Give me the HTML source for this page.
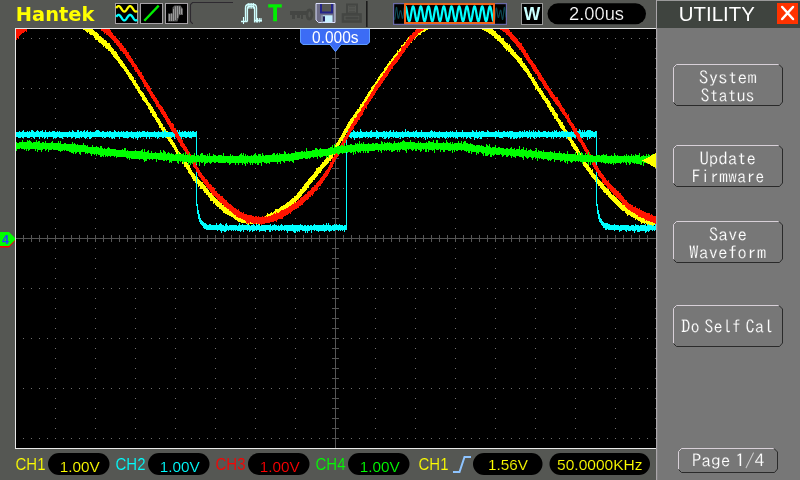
<!DOCTYPE html>
<html lang="en">
<head>
<meta charset="utf-8">
<title>Hantek DSO - Utility</title>
<style>
html,body{margin:0;padding:0;background:#555753;width:800px;height:480px;overflow:hidden}
svg{display:block;position:absolute;left:0;top:0;will-change:transform}
.ar{font-family:"Liberation Sans",sans-serif}
.go{font-family:"IPAGothic","Liberation Mono",monospace}
.btn text{font-size:18px;fill:#fff;text-anchor:middle;stroke:#777;stroke-width:0.22px}
</style>
</head>
<body>
<svg width="800" height="480" viewBox="0 0 800 480">
  <rect width="800" height="480" fill="#555753"/>

  <!-- ======================= plot area ======================= -->
  <g shape-rendering="crispEdges">
    <rect x="15" y="28" width="642" height="421" fill="#e8e8e8"/>
    <rect x="16" y="29" width="640" height="419" fill="#000"/>
    <!-- dotted graticule -->
    <path d="M23 38h1M23 88h1M23 138h1M23 188h1M23 288h1M23 338h1M23 388h1M23 438h1M31 38h1M31 88h1M31 138h1M31 188h1M31 288h1M31 338h1M31 388h1M31 438h1M39 38h1M39 88h1M39 138h1M39 188h1M39 288h1M39 338h1M39 388h1M39 438h1M47 38h1M47 88h1M47 138h1M47 188h1M47 288h1M47 338h1M47 388h1M47 438h1M55 38h1M55 48h1M55 58h1M55 68h1M55 78h1M55 88h1M55 98h1M55 108h1M55 118h1M55 128h1M55 138h1M55 148h1M55 158h1M55 168h1M55 178h1M55 188h1M55 198h1M55 208h1M55 218h1M55 228h1M55 248h1M55 258h1M55 268h1M55 278h1M55 288h1M55 298h1M55 308h1M55 318h1M55 328h1M55 338h1M55 348h1M55 358h1M55 368h1M55 378h1M55 388h1M55 398h1M55 408h1M55 418h1M55 428h1M55 438h1M63 38h1M63 88h1M63 138h1M63 188h1M63 288h1M63 338h1M63 388h1M63 438h1M71 38h1M71 88h1M71 138h1M71 188h1M71 288h1M71 338h1M71 388h1M71 438h1M79 38h1M79 88h1M79 138h1M79 188h1M79 288h1M79 338h1M79 388h1M79 438h1M87 38h1M87 88h1M87 138h1M87 188h1M87 288h1M87 338h1M87 388h1M87 438h1M95 38h1M95 48h1M95 58h1M95 68h1M95 78h1M95 88h1M95 98h1M95 108h1M95 118h1M95 128h1M95 138h1M95 148h1M95 158h1M95 168h1M95 178h1M95 188h1M95 198h1M95 208h1M95 218h1M95 228h1M95 248h1M95 258h1M95 268h1M95 278h1M95 288h1M95 298h1M95 308h1M95 318h1M95 328h1M95 338h1M95 348h1M95 358h1M95 368h1M95 378h1M95 388h1M95 398h1M95 408h1M95 418h1M95 428h1M95 438h1M103 38h1M103 88h1M103 138h1M103 188h1M103 288h1M103 338h1M103 388h1M103 438h1M111 38h1M111 88h1M111 138h1M111 188h1M111 288h1M111 338h1M111 388h1M111 438h1M119 38h1M119 88h1M119 138h1M119 188h1M119 288h1M119 338h1M119 388h1M119 438h1M127 38h1M127 88h1M127 138h1M127 188h1M127 288h1M127 338h1M127 388h1M127 438h1M135 38h1M135 48h1M135 58h1M135 68h1M135 78h1M135 88h1M135 98h1M135 108h1M135 118h1M135 128h1M135 138h1M135 148h1M135 158h1M135 168h1M135 178h1M135 188h1M135 198h1M135 208h1M135 218h1M135 228h1M135 248h1M135 258h1M135 268h1M135 278h1M135 288h1M135 298h1M135 308h1M135 318h1M135 328h1M135 338h1M135 348h1M135 358h1M135 368h1M135 378h1M135 388h1M135 398h1M135 408h1M135 418h1M135 428h1M135 438h1M143 38h1M143 88h1M143 138h1M143 188h1M143 288h1M143 338h1M143 388h1M143 438h1M151 38h1M151 88h1M151 138h1M151 188h1M151 288h1M151 338h1M151 388h1M151 438h1M159 38h1M159 88h1M159 138h1M159 188h1M159 288h1M159 338h1M159 388h1M159 438h1M167 38h1M167 88h1M167 138h1M167 188h1M167 288h1M167 338h1M167 388h1M167 438h1M175 38h1M175 48h1M175 58h1M175 68h1M175 78h1M175 88h1M175 98h1M175 108h1M175 118h1M175 128h1M175 138h1M175 148h1M175 158h1M175 168h1M175 178h1M175 188h1M175 198h1M175 208h1M175 218h1M175 228h1M175 248h1M175 258h1M175 268h1M175 278h1M175 288h1M175 298h1M175 308h1M175 318h1M175 328h1M175 338h1M175 348h1M175 358h1M175 368h1M175 378h1M175 388h1M175 398h1M175 408h1M175 418h1M175 428h1M175 438h1M183 38h1M183 88h1M183 138h1M183 188h1M183 288h1M183 338h1M183 388h1M183 438h1M191 38h1M191 88h1M191 138h1M191 188h1M191 288h1M191 338h1M191 388h1M191 438h1M199 38h1M199 88h1M199 138h1M199 188h1M199 288h1M199 338h1M199 388h1M199 438h1M207 38h1M207 88h1M207 138h1M207 188h1M207 288h1M207 338h1M207 388h1M207 438h1M215 38h1M215 48h1M215 58h1M215 68h1M215 78h1M215 88h1M215 98h1M215 108h1M215 118h1M215 128h1M215 138h1M215 148h1M215 158h1M215 168h1M215 178h1M215 188h1M215 198h1M215 208h1M215 218h1M215 228h1M215 248h1M215 258h1M215 268h1M215 278h1M215 288h1M215 298h1M215 308h1M215 318h1M215 328h1M215 338h1M215 348h1M215 358h1M215 368h1M215 378h1M215 388h1M215 398h1M215 408h1M215 418h1M215 428h1M215 438h1M223 38h1M223 88h1M223 138h1M223 188h1M223 288h1M223 338h1M223 388h1M223 438h1M231 38h1M231 88h1M231 138h1M231 188h1M231 288h1M231 338h1M231 388h1M231 438h1M239 38h1M239 88h1M239 138h1M239 188h1M239 288h1M239 338h1M239 388h1M239 438h1M247 38h1M247 88h1M247 138h1M247 188h1M247 288h1M247 338h1M247 388h1M247 438h1M255 38h1M255 48h1M255 58h1M255 68h1M255 78h1M255 88h1M255 98h1M255 108h1M255 118h1M255 128h1M255 138h1M255 148h1M255 158h1M255 168h1M255 178h1M255 188h1M255 198h1M255 208h1M255 218h1M255 228h1M255 248h1M255 258h1M255 268h1M255 278h1M255 288h1M255 298h1M255 308h1M255 318h1M255 328h1M255 338h1M255 348h1M255 358h1M255 368h1M255 378h1M255 388h1M255 398h1M255 408h1M255 418h1M255 428h1M255 438h1M263 38h1M263 88h1M263 138h1M263 188h1M263 288h1M263 338h1M263 388h1M263 438h1M271 38h1M271 88h1M271 138h1M271 188h1M271 288h1M271 338h1M271 388h1M271 438h1M279 38h1M279 88h1M279 138h1M279 188h1M279 288h1M279 338h1M279 388h1M279 438h1M287 38h1M287 88h1M287 138h1M287 188h1M287 288h1M287 338h1M287 388h1M287 438h1M295 38h1M295 48h1M295 58h1M295 68h1M295 78h1M295 88h1M295 98h1M295 108h1M295 118h1M295 128h1M295 138h1M295 148h1M295 158h1M295 168h1M295 178h1M295 188h1M295 198h1M295 208h1M295 218h1M295 228h1M295 248h1M295 258h1M295 268h1M295 278h1M295 288h1M295 298h1M295 308h1M295 318h1M295 328h1M295 338h1M295 348h1M295 358h1M295 368h1M295 378h1M295 388h1M295 398h1M295 408h1M295 418h1M295 428h1M295 438h1M303 38h1M303 88h1M303 138h1M303 188h1M303 288h1M303 338h1M303 388h1M303 438h1M311 38h1M311 88h1M311 138h1M311 188h1M311 288h1M311 338h1M311 388h1M311 438h1M319 38h1M319 88h1M319 138h1M319 188h1M319 288h1M319 338h1M319 388h1M319 438h1M327 38h1M327 88h1M327 138h1M327 188h1M327 288h1M327 338h1M327 388h1M327 438h1M343 38h1M343 88h1M343 138h1M343 188h1M343 288h1M343 338h1M343 388h1M343 438h1M351 38h1M351 88h1M351 138h1M351 188h1M351 288h1M351 338h1M351 388h1M351 438h1M359 38h1M359 88h1M359 138h1M359 188h1M359 288h1M359 338h1M359 388h1M359 438h1M367 38h1M367 88h1M367 138h1M367 188h1M367 288h1M367 338h1M367 388h1M367 438h1M375 38h1M375 48h1M375 58h1M375 68h1M375 78h1M375 88h1M375 98h1M375 108h1M375 118h1M375 128h1M375 138h1M375 148h1M375 158h1M375 168h1M375 178h1M375 188h1M375 198h1M375 208h1M375 218h1M375 228h1M375 248h1M375 258h1M375 268h1M375 278h1M375 288h1M375 298h1M375 308h1M375 318h1M375 328h1M375 338h1M375 348h1M375 358h1M375 368h1M375 378h1M375 388h1M375 398h1M375 408h1M375 418h1M375 428h1M375 438h1M383 38h1M383 88h1M383 138h1M383 188h1M383 288h1M383 338h1M383 388h1M383 438h1M391 38h1M391 88h1M391 138h1M391 188h1M391 288h1M391 338h1M391 388h1M391 438h1M399 38h1M399 88h1M399 138h1M399 188h1M399 288h1M399 338h1M399 388h1M399 438h1M407 38h1M407 88h1M407 138h1M407 188h1M407 288h1M407 338h1M407 388h1M407 438h1M415 38h1M415 48h1M415 58h1M415 68h1M415 78h1M415 88h1M415 98h1M415 108h1M415 118h1M415 128h1M415 138h1M415 148h1M415 158h1M415 168h1M415 178h1M415 188h1M415 198h1M415 208h1M415 218h1M415 228h1M415 248h1M415 258h1M415 268h1M415 278h1M415 288h1M415 298h1M415 308h1M415 318h1M415 328h1M415 338h1M415 348h1M415 358h1M415 368h1M415 378h1M415 388h1M415 398h1M415 408h1M415 418h1M415 428h1M415 438h1M423 38h1M423 88h1M423 138h1M423 188h1M423 288h1M423 338h1M423 388h1M423 438h1M431 38h1M431 88h1M431 138h1M431 188h1M431 288h1M431 338h1M431 388h1M431 438h1M439 38h1M439 88h1M439 138h1M439 188h1M439 288h1M439 338h1M439 388h1M439 438h1M447 38h1M447 88h1M447 138h1M447 188h1M447 288h1M447 338h1M447 388h1M447 438h1M455 38h1M455 48h1M455 58h1M455 68h1M455 78h1M455 88h1M455 98h1M455 108h1M455 118h1M455 128h1M455 138h1M455 148h1M455 158h1M455 168h1M455 178h1M455 188h1M455 198h1M455 208h1M455 218h1M455 228h1M455 248h1M455 258h1M455 268h1M455 278h1M455 288h1M455 298h1M455 308h1M455 318h1M455 328h1M455 338h1M455 348h1M455 358h1M455 368h1M455 378h1M455 388h1M455 398h1M455 408h1M455 418h1M455 428h1M455 438h1M463 38h1M463 88h1M463 138h1M463 188h1M463 288h1M463 338h1M463 388h1M463 438h1M471 38h1M471 88h1M471 138h1M471 188h1M471 288h1M471 338h1M471 388h1M471 438h1M479 38h1M479 88h1M479 138h1M479 188h1M479 288h1M479 338h1M479 388h1M479 438h1M487 38h1M487 88h1M487 138h1M487 188h1M487 288h1M487 338h1M487 388h1M487 438h1M495 38h1M495 48h1M495 58h1M495 68h1M495 78h1M495 88h1M495 98h1M495 108h1M495 118h1M495 128h1M495 138h1M495 148h1M495 158h1M495 168h1M495 178h1M495 188h1M495 198h1M495 208h1M495 218h1M495 228h1M495 248h1M495 258h1M495 268h1M495 278h1M495 288h1M495 298h1M495 308h1M495 318h1M495 328h1M495 338h1M495 348h1M495 358h1M495 368h1M495 378h1M495 388h1M495 398h1M495 408h1M495 418h1M495 428h1M495 438h1M503 38h1M503 88h1M503 138h1M503 188h1M503 288h1M503 338h1M503 388h1M503 438h1M511 38h1M511 88h1M511 138h1M511 188h1M511 288h1M511 338h1M511 388h1M511 438h1M519 38h1M519 88h1M519 138h1M519 188h1M519 288h1M519 338h1M519 388h1M519 438h1M527 38h1M527 88h1M527 138h1M527 188h1M527 288h1M527 338h1M527 388h1M527 438h1M535 38h1M535 48h1M535 58h1M535 68h1M535 78h1M535 88h1M535 98h1M535 108h1M535 118h1M535 128h1M535 138h1M535 148h1M535 158h1M535 168h1M535 178h1M535 188h1M535 198h1M535 208h1M535 218h1M535 228h1M535 248h1M535 258h1M535 268h1M535 278h1M535 288h1M535 298h1M535 308h1M535 318h1M535 328h1M535 338h1M535 348h1M535 358h1M535 368h1M535 378h1M535 388h1M535 398h1M535 408h1M535 418h1M535 428h1M535 438h1M543 38h1M543 88h1M543 138h1M543 188h1M543 288h1M543 338h1M543 388h1M543 438h1M551 38h1M551 88h1M551 138h1M551 188h1M551 288h1M551 338h1M551 388h1M551 438h1M559 38h1M559 88h1M559 138h1M559 188h1M559 288h1M559 338h1M559 388h1M559 438h1M567 38h1M567 88h1M567 138h1M567 188h1M567 288h1M567 338h1M567 388h1M567 438h1M575 38h1M575 48h1M575 58h1M575 68h1M575 78h1M575 88h1M575 98h1M575 108h1M575 118h1M575 128h1M575 138h1M575 148h1M575 158h1M575 168h1M575 178h1M575 188h1M575 198h1M575 208h1M575 218h1M575 228h1M575 248h1M575 258h1M575 268h1M575 278h1M575 288h1M575 298h1M575 308h1M575 318h1M575 328h1M575 338h1M575 348h1M575 358h1M575 368h1M575 378h1M575 388h1M575 398h1M575 408h1M575 418h1M575 428h1M575 438h1M583 38h1M583 88h1M583 138h1M583 188h1M583 288h1M583 338h1M583 388h1M583 438h1M591 38h1M591 88h1M591 138h1M591 188h1M591 288h1M591 338h1M591 388h1M591 438h1M599 38h1M599 88h1M599 138h1M599 188h1M599 288h1M599 338h1M599 388h1M599 438h1M607 38h1M607 88h1M607 138h1M607 188h1M607 288h1M607 338h1M607 388h1M607 438h1M615 38h1M615 48h1M615 58h1M615 68h1M615 78h1M615 88h1M615 98h1M615 108h1M615 118h1M615 128h1M615 138h1M615 148h1M615 158h1M615 168h1M615 178h1M615 188h1M615 198h1M615 208h1M615 218h1M615 228h1M615 248h1M615 258h1M615 268h1M615 278h1M615 288h1M615 298h1M615 308h1M615 318h1M615 328h1M615 338h1M615 348h1M615 358h1M615 368h1M615 378h1M615 388h1M615 398h1M615 408h1M615 418h1M615 428h1M615 438h1M623 38h1M623 88h1M623 138h1M623 188h1M623 288h1M623 338h1M623 388h1M623 438h1M631 38h1M631 88h1M631 138h1M631 188h1M631 288h1M631 338h1M631 388h1M631 438h1M639 38h1M639 88h1M639 138h1M639 188h1M639 288h1M639 338h1M639 388h1M639 438h1M647 38h1M647 88h1M647 138h1M647 188h1M647 288h1M647 338h1M647 388h1M647 438h1M655 38h1M655 48h1M655 58h1M655 68h1M655 78h1M655 88h1M655 98h1M655 108h1M655 118h1M655 128h1M655 138h1M655 148h1M655 158h1M655 168h1M655 178h1M655 188h1M655 198h1M655 208h1M655 218h1M655 228h1M655 248h1M655 258h1M655 268h1M655 278h1M655 288h1M655 298h1M655 308h1M655 318h1M655 328h1M655 338h1M655 348h1M655 358h1M655 368h1M655 378h1M655 388h1M655 398h1M655 408h1M655 418h1M655 428h1M655 438h1" stroke="#6e6e6e" stroke-width="1" transform="translate(0,0.5)" fill="none"/>
    <!-- centre axes -->
    <path d="M16 238.5H656M335.5 52V448" stroke="#555555" stroke-width="1" fill="none"/>
    <path d="M23.5 235V242M31.5 235V242M39.5 235V242M47.5 235V242M55.5 235V242M63.5 235V242M71.5 235V242M79.5 235V242M87.5 235V242M95.5 235V242M103.5 235V242M111.5 235V242M119.5 235V242M127.5 235V242M135.5 235V242M143.5 235V242M151.5 235V242M159.5 235V242M167.5 235V242M175.5 235V242M183.5 235V242M191.5 235V242M199.5 235V242M207.5 235V242M215.5 235V242M223.5 235V242M231.5 235V242M239.5 235V242M247.5 235V242M255.5 235V242M263.5 235V242M271.5 235V242M279.5 235V242M287.5 235V242M295.5 235V242M303.5 235V242M311.5 235V242M319.5 235V242M327.5 235V242M335.5 235V242M343.5 235V242M351.5 235V242M359.5 235V242M367.5 235V242M375.5 235V242M383.5 235V242M391.5 235V242M399.5 235V242M407.5 235V242M415.5 235V242M423.5 235V242M431.5 235V242M439.5 235V242M447.5 235V242M455.5 235V242M463.5 235V242M471.5 235V242M479.5 235V242M487.5 235V242M495.5 235V242M503.5 235V242M511.5 235V242M519.5 235V242M527.5 235V242M535.5 235V242M543.5 235V242M551.5 235V242M559.5 235V242M567.5 235V242M575.5 235V242M583.5 235V242M591.5 235V242M599.5 235V242M607.5 235V242M615.5 235V242M623.5 235V242M631.5 235V242M639.5 235V242M647.5 235V242M332 58.5H339M332 68.5H339M332 78.5H339M332 88.5H339M332 98.5H339M332 108.5H339M332 118.5H339M332 128.5H339M332 138.5H339M332 148.5H339M332 158.5H339M332 168.5H339M332 178.5H339M332 188.5H339M332 198.5H339M332 208.5H339M332 218.5H339M332 228.5H339M332 238.5H339M332 248.5H339M332 258.5H339M332 268.5H339M332 278.5H339M332 288.5H339M332 298.5H339M332 308.5H339M332 318.5H339M332 328.5H339M332 338.5H339M332 348.5H339M332 358.5H339M332 368.5H339M332 378.5H339M332 388.5H339M332 398.5H339M332 408.5H339M332 418.5H339M332 428.5H339M332 438.5H339" stroke="#555555" stroke-width="1" fill="none"/>
    <!-- traces -->
    <path d="M16.5 29V37M17.5 29V36M18.5 29V34M19.5 29V34M20.5 29V33M21.5 29V32M22.5 29V32M23.5 29V30M24.5 29V30M83.5 29V30M84.5 29V30M85.5 29V31M86.5 29V32M87.5 29V33M88.5 29V32M89.5 29V34M90.5 29V35M91.5 29V35M92.5 29V35M93.5 30V36M94.5 31V38M95.5 32V40M96.5 32V40M97.5 33V40M98.5 34V42M99.5 36V43M100.5 36V43M101.5 37V44M102.5 38V45M103.5 39V47M104.5 40V46M105.5 40V48M106.5 41V49M107.5 43V49M108.5 43V51M109.5 43V51M110.5 45V52M111.5 47V54M112.5 48V55M113.5 49V57M114.5 51V58M115.5 51V59M116.5 52V60M117.5 54V61M118.5 56V63M119.5 57V64M120.5 59V66M121.5 60V67M122.5 61V68M123.5 63V69M124.5 64V71M125.5 66V72M126.5 67V74M127.5 69V75M128.5 70V77M129.5 72V79M130.5 73V80M131.5 74V81M132.5 76V83M133.5 77V85M134.5 80V86M135.5 80V88M136.5 83V89M137.5 84V91M138.5 86V93M139.5 87V94M140.5 90V96M141.5 91V97M142.5 92V100M143.5 93V101M144.5 95V102M145.5 97V103M146.5 98V105M147.5 100V106M148.5 102V109M149.5 103V110M150.5 104V113M151.5 106V113M152.5 107V116M153.5 109V117M154.5 111V118M155.5 112V120M156.5 114V122M157.5 117V123M158.5 118V125M159.5 119V128M160.5 121V128M161.5 123V130M162.5 124V132M163.5 127V134M164.5 127V135M165.5 129V137M166.5 131V138M167.5 131V139M168.5 134V141M169.5 135V142M170.5 137V144M171.5 139V145M172.5 140V147M173.5 142V148M174.5 143V150M175.5 145V152M176.5 147V154M177.5 149V156M178.5 151V158M179.5 152V159M180.5 153V161M181.5 155V161M182.5 156V164M183.5 157V164M184.5 159V167M185.5 160V167M186.5 161V169M187.5 163V170M188.5 165V173M189.5 165V174M190.5 168V175M191.5 170V177M192.5 172V179M193.5 173V181M194.5 174V181M195.5 176V183M196.5 176V183M197.5 177V184M198.5 179V187M199.5 180V186M200.5 181V189M201.5 182V189M202.5 182V189M203.5 184V191M204.5 185V193M205.5 186V193M206.5 188V195M207.5 189V195M208.5 190V197M209.5 192V198M210.5 193V201M211.5 193V201M212.5 195V201M213.5 196V204M214.5 197V203M215.5 198V205M216.5 199V206M217.5 200V207M218.5 201V207M219.5 201V209M220.5 203V209M221.5 203V210M222.5 205V211M223.5 204V213M224.5 205V213M225.5 206V214M226.5 207V214M227.5 207V215M228.5 209V215M229.5 209V216M230.5 210V216M231.5 210V217M232.5 211V217M233.5 212V218M234.5 213V219M235.5 212V220M236.5 213V220M237.5 213V221M238.5 214V222M239.5 214V222M240.5 215V222M241.5 216V223M242.5 216V223M243.5 216V223M244.5 216V223M245.5 216V223M246.5 217V224M247.5 217V224M248.5 218V225M249.5 217V224M250.5 218V224M251.5 218V224M252.5 217V224M253.5 217V224M254.5 217V224M255.5 217V224M256.5 216V224M257.5 217V224M258.5 218V224M259.5 218V225M260.5 218V224M261.5 217V225M262.5 217V224M263.5 217V224M264.5 217V224M265.5 216V223M266.5 215V222M267.5 213V222M268.5 214V221M269.5 214V221M270.5 213V221M271.5 212V219M272.5 213V219M273.5 212V218M274.5 211V218M275.5 209V218M276.5 209V217M277.5 209V217M278.5 209V215M279.5 208V215M280.5 207V214M281.5 206V213M282.5 206V212M283.5 205V212M284.5 205V212M285.5 204V211M286.5 203V210M287.5 202V211M288.5 202V209M289.5 201V209M290.5 200V207M291.5 199V206M292.5 198V205M293.5 198V204M294.5 196V204M295.5 196V203M296.5 195V201M297.5 193V200M298.5 192V199M299.5 191V198M300.5 189V197M301.5 189V196M302.5 187V194M303.5 186V193M304.5 184V192M305.5 183V191M306.5 182V190M307.5 181V188M308.5 179V188M309.5 178V185M310.5 177V184M311.5 176V183M312.5 175V182M313.5 174V180M314.5 172V180M315.5 171V178M316.5 168V177M317.5 168V176M318.5 167V174M319.5 167V173M320.5 165V173M321.5 164V171M322.5 162V169M323.5 162V168M324.5 160V167M325.5 159V166M326.5 158V165M327.5 157V164M328.5 155V163M329.5 155V161M330.5 154V161M331.5 152V159M332.5 151V158M333.5 148V155M334.5 147V155M335.5 145V153M336.5 143V150M337.5 142V149M338.5 140V146M339.5 138V145M340.5 137V143M341.5 135V141M342.5 133V141M343.5 131V138M344.5 129V137M345.5 128V135M346.5 126V133M347.5 124V131M348.5 122V129M349.5 121V128M350.5 119V126M351.5 118V125M352.5 117V124M353.5 115V122M354.5 114V120M355.5 112V119M356.5 111V119M357.5 109V116M358.5 109V115M359.5 107V113M360.5 104V112M361.5 104V110M362.5 102V109M363.5 101V107M364.5 99V105M365.5 97V105M366.5 96V102M367.5 94V101M368.5 92V100M369.5 91V98M370.5 90V96M371.5 87V94M372.5 86V93M373.5 85V92M374.5 84V91M375.5 82V89M376.5 81V87M377.5 79V86M378.5 77V84M379.5 76V82M380.5 74V82M381.5 73V80M382.5 72V78M383.5 71V77M384.5 68V76M385.5 67V75M386.5 66V72M387.5 64V71M388.5 63V70M389.5 61V69M390.5 61V68M391.5 59V66M392.5 58V65M393.5 56V63M394.5 55V63M395.5 54V60M396.5 53V60M397.5 50V59M398.5 51V57M399.5 49V56M400.5 48V55M401.5 45V53M402.5 45V52M403.5 44V50M404.5 42V49M405.5 42V49M406.5 40V46M407.5 39V46M408.5 37V45M409.5 37V43M410.5 36V43M411.5 35V43M412.5 34V40M413.5 33V39M414.5 32V40M415.5 31V38M416.5 30V37M417.5 30V36M418.5 29V35M419.5 29V35M420.5 29V35M421.5 29V33M422.5 29V32M423.5 29V32M424.5 29V32M425.5 29V31M426.5 29V30M427.5 29V30M482.5 29V30M483.5 29V30M484.5 29V31M485.5 29V31M486.5 29V32M487.5 29V32M488.5 29V33M489.5 29V34M490.5 29V34M491.5 29V35M492.5 29V36M493.5 30V36M494.5 31V38M495.5 31V39M496.5 33V39M497.5 34V41M498.5 35V41M499.5 35V42M500.5 36V43M501.5 38V44M502.5 38V45M503.5 38V47M504.5 41V48M505.5 42V49M506.5 43V51M507.5 43V50M508.5 45V52M509.5 44V52M510.5 46V54M511.5 48V55M512.5 49V56M513.5 50V57M514.5 52V58M515.5 52V59M516.5 54V60M517.5 55V62M518.5 56V63M519.5 57V64M520.5 58V66M521.5 58V67M522.5 61V68M523.5 63V70M524.5 63V71M525.5 65V72M526.5 66V73M527.5 68V75M528.5 69V77M529.5 71V78M530.5 73V79M531.5 74V81M532.5 77V83M533.5 77V85M534.5 79V86M535.5 81V90M536.5 82V89M537.5 84V91M538.5 86V92M539.5 88V94M540.5 88V95M541.5 90V97M542.5 91V99M543.5 93V100M544.5 95V101M545.5 96V103M546.5 98V104M547.5 98V107M548.5 100V108M549.5 101V110M550.5 103V112M551.5 106V112M552.5 107V115M553.5 108V116M554.5 110V119M555.5 112V119M556.5 113V121M557.5 114V122M558.5 118V124M559.5 119V126M560.5 120V128M561.5 122V129M562.5 122V130M563.5 125V132M564.5 126V134M565.5 129V135M566.5 130V137M567.5 132V138M568.5 133V140M569.5 135V141M570.5 136V143M571.5 138V146M572.5 140V147M573.5 141V149M574.5 143V150M575.5 144V151M576.5 146V153M577.5 147V155M578.5 149V157M579.5 151V159M580.5 153V160M581.5 154V161M582.5 156V163M583.5 158V166M584.5 160V167M585.5 161V168M586.5 163V170M587.5 164V171M588.5 165V172M589.5 167V174M590.5 168V175M591.5 170V177M592.5 169V178M593.5 173V179M594.5 174V180M595.5 175V182M596.5 177V183M597.5 177V184M598.5 179V186M599.5 180V186M600.5 181V188M601.5 182V189M602.5 181V190M603.5 184V192M604.5 186V193M605.5 187V193M606.5 188V195M607.5 189V195M608.5 188V197M609.5 191V198M610.5 192V199M611.5 194V200M612.5 195V201M613.5 195V202M614.5 196V203M615.5 197V204M616.5 198V205M617.5 199V206M618.5 200V207M619.5 201V208M620.5 202V209M621.5 203V210M622.5 203V211M623.5 204V211M624.5 204V211M625.5 206V213M626.5 206V214M627.5 207V216M628.5 208V215M629.5 208V215M630.5 209V216M631.5 210V217M632.5 210V217M633.5 211V218M634.5 212V218M635.5 212V220M636.5 212V219M637.5 213V220M638.5 214V221M639.5 215V221M640.5 215V222M641.5 216V224M642.5 216V223M643.5 216V223M644.5 216V224M645.5 217V223M646.5 216V224M647.5 217V225M648.5 217V224M649.5 218V225M650.5 218V225M651.5 218V225M652.5 218V226M653.5 219V227M654.5 219V225M655.5 219V226" stroke="#ffff00" stroke-width="1" fill="none"/>
    <path d="M16.5 132V137M17.5 132V137M18.5 132V138M19.5 131V138M20.5 132V138M21.5 132V137M22.5 131V138M23.5 130V138M24.5 132V137M25.5 132V137M26.5 132V137M27.5 131V138M28.5 132V138M29.5 131V138M30.5 132V137M31.5 130V137M32.5 130V137M33.5 131V138M34.5 132V139M35.5 132V137M36.5 131V137M37.5 130V137M38.5 131V137M39.5 132V139M40.5 131V137M41.5 131V137M42.5 130V138M43.5 132V137M44.5 132V139M45.5 130V138M46.5 132V137M47.5 132V139M48.5 132V137M49.5 131V137M50.5 132V137M51.5 132V137M52.5 131V137M53.5 131V139M54.5 131V138M55.5 132V138M56.5 132V138M57.5 131V137M58.5 132V137M59.5 131V138M60.5 132V138M61.5 132V138M62.5 132V139M63.5 132V137M64.5 132V137M65.5 132V137M66.5 132V137M67.5 132V138M68.5 132V137M69.5 131V137M70.5 132V137M71.5 132V138M72.5 130V138M73.5 131V137M74.5 132V137M75.5 132V139M76.5 132V138M77.5 130V138M78.5 130V138M79.5 132V138M80.5 131V137M81.5 131V138M82.5 132V137M83.5 131V137M84.5 130V138M85.5 132V139M86.5 131V138M87.5 130V137M88.5 132V137M89.5 132V139M90.5 131V139M91.5 132V138M92.5 132V137M93.5 132V137M94.5 132V137M95.5 131V137M96.5 130V137M97.5 130V137M98.5 130V137M99.5 131V137M100.5 132V137M101.5 132V137M102.5 131V138M103.5 131V137M104.5 132V138M105.5 132V138M106.5 132V137M107.5 131V137M108.5 132V137M109.5 131V138M110.5 131V137M111.5 132V138M112.5 132V139M113.5 132V138M114.5 130V139M115.5 131V137M116.5 132V137M117.5 132V137M118.5 131V137M119.5 132V139M120.5 132V137M121.5 131V137M122.5 132V137M123.5 131V138M124.5 132V138M125.5 132V138M126.5 131V138M127.5 131V138M128.5 132V138M129.5 132V137M130.5 132V137M131.5 131V138M132.5 132V138M133.5 132V139M134.5 132V137M135.5 132V138M136.5 132V138M137.5 131V140M138.5 132V138M139.5 131V137M140.5 132V138M141.5 132V137M142.5 131V137M143.5 131V137M144.5 131V137M145.5 132V137M146.5 132V139M147.5 131V137M148.5 132V137M149.5 132V139M150.5 132V137M151.5 132V137M152.5 132V137M153.5 132V137M154.5 131V137M155.5 132V138M156.5 132V137M157.5 132V139M158.5 131V138M159.5 132V137M160.5 132V137M161.5 132V137M162.5 131V138M163.5 132V138M164.5 130V137M165.5 131V138M166.5 132V137M167.5 132V137M168.5 132V137M169.5 132V137M170.5 132V137M171.5 132V138M172.5 132V137M173.5 131V137M174.5 131V139M175.5 131V137M176.5 132V138M177.5 130V137M178.5 132V137M179.5 130V137M180.5 132V137M181.5 132V139M182.5 131V137M183.5 132V137M184.5 131V137M185.5 131V138M186.5 132V138M187.5 132V137M188.5 131V137M189.5 132V138M190.5 131V138M191.5 132V138M192.5 131V137M193.5 131V137M194.5 132V137M195.5 132V137M196.5 131V206M197.5 204V214M198.5 210V219M199.5 214V222M200.5 218V224M201.5 220V225M202.5 221V226M203.5 222V228M204.5 223V229M205.5 223V229M206.5 224V230M207.5 225V230M208.5 225V230M209.5 224V230M210.5 224V230M211.5 225V230M212.5 225V230M213.5 225V230M214.5 225V230M215.5 225V230M216.5 223V230M217.5 225V231M218.5 225V230M219.5 224V230M220.5 223V231M221.5 224V233M222.5 225V231M223.5 225V231M224.5 226V232M225.5 224V232M226.5 223V231M227.5 225V230M228.5 226V231M229.5 225V230M230.5 225V230M231.5 225V231M232.5 225V230M233.5 225V231M234.5 225V230M235.5 225V231M236.5 225V230M237.5 226V231M238.5 225V231M239.5 223V231M240.5 225V232M241.5 225V231M242.5 224V230M243.5 225V232M244.5 225V230M245.5 225V230M246.5 225V230M247.5 223V231M248.5 225V230M249.5 225V232M250.5 226V231M251.5 225V230M252.5 225V232M253.5 224V231M254.5 225V231M255.5 226V230M256.5 224V231M257.5 225V230M258.5 224V230M259.5 225V232M260.5 226V231M261.5 225V231M262.5 225V231M263.5 225V231M264.5 225V231M265.5 225V232M266.5 225V230M267.5 225V230M268.5 225V230M269.5 225V232M270.5 224V232M271.5 226V230M272.5 225V231M273.5 225V230M274.5 224V230M275.5 225V231M276.5 225V230M277.5 226V230M278.5 225V231M279.5 226V231M280.5 225V230M281.5 224V231M282.5 225V230M283.5 226V230M284.5 225V231M285.5 225V230M286.5 225V231M287.5 225V233M288.5 225V231M289.5 225V231M290.5 225V231M291.5 225V231M292.5 224V231M293.5 225V232M294.5 225V233M295.5 225V233M296.5 225V231M297.5 225V232M298.5 225V231M299.5 225V232M300.5 224V230M301.5 225V230M302.5 225V231M303.5 226V231M304.5 225V231M305.5 225V233M306.5 226V231M307.5 225V233M308.5 225V231M309.5 226V231M310.5 225V230M311.5 225V233M312.5 226V230M313.5 225V230M314.5 224V231M315.5 225V230M316.5 225V231M317.5 225V231M318.5 225V232M319.5 225V231M320.5 225V231M321.5 225V231M322.5 225V231M323.5 224V231M324.5 225V232M325.5 225V231M326.5 223V231M327.5 225V230M328.5 223V231M329.5 225V232M330.5 225V231M331.5 226V231M332.5 225V230M333.5 225V231M334.5 224V231M335.5 225V230M336.5 224V230M337.5 225V230M338.5 225V231M339.5 224V230M340.5 225V231M341.5 225V230M342.5 225V231M343.5 226V230M344.5 225V232M345.5 225V230M346.5 134V230M347.5 131V137M348.5 132V137M349.5 130V137M350.5 131V138M351.5 132V138M352.5 132V137M353.5 130V138M354.5 131V140M355.5 132V138M356.5 132V138M357.5 131V138M358.5 132V137M359.5 132V138M360.5 129V138M361.5 131V138M362.5 132V138M363.5 132V137M364.5 132V137M365.5 132V138M366.5 131V137M367.5 132V137M368.5 132V138M369.5 132V137M370.5 131V138M371.5 130V138M372.5 132V137M373.5 132V137M374.5 132V137M375.5 132V137M376.5 130V139M377.5 131V138M378.5 132V139M379.5 132V137M380.5 132V137M381.5 132V137M382.5 132V138M383.5 131V137M384.5 131V139M385.5 132V139M386.5 131V138M387.5 132V137M388.5 132V139M389.5 131V138M390.5 130V137M391.5 132V137M392.5 132V137M393.5 130V138M394.5 132V137M395.5 132V138M396.5 131V138M397.5 132V138M398.5 132V138M399.5 132V137M400.5 132V139M401.5 132V137M402.5 131V138M403.5 132V138M404.5 132V137M405.5 129V137M406.5 132V137M407.5 131V137M408.5 131V137M409.5 132V138M410.5 132V137M411.5 132V137M412.5 132V137M413.5 131V137M414.5 132V138M415.5 131V137M416.5 130V137M417.5 132V138M418.5 132V138M419.5 132V137M420.5 132V137M421.5 130V138M422.5 132V137M423.5 132V137M424.5 132V138M425.5 132V140M426.5 132V137M427.5 132V139M428.5 132V137M429.5 132V138M430.5 131V138M431.5 130V137M432.5 131V138M433.5 132V137M434.5 131V138M435.5 132V138M436.5 132V137M437.5 132V138M438.5 132V138M439.5 131V138M440.5 132V137M441.5 132V137M442.5 132V138M443.5 132V137M444.5 132V138M445.5 132V139M446.5 131V138M447.5 132V137M448.5 132V138M449.5 132V137M450.5 131V138M451.5 132V137M452.5 131V137M453.5 132V138M454.5 132V137M455.5 132V138M456.5 130V138M457.5 132V139M458.5 132V137M459.5 132V137M460.5 132V137M461.5 132V138M462.5 130V137M463.5 132V138M464.5 132V137M465.5 132V137M466.5 132V139M467.5 132V138M468.5 132V137M469.5 132V138M470.5 132V139M471.5 132V137M472.5 130V137M473.5 131V137M474.5 132V140M475.5 132V138M476.5 130V138M477.5 132V139M478.5 132V138M479.5 131V137M480.5 132V139M481.5 131V139M482.5 131V137M483.5 131V137M484.5 132V137M485.5 132V137M486.5 132V137M487.5 130V137M488.5 131V137M489.5 132V137M490.5 132V137M491.5 132V137M492.5 132V137M493.5 132V137M494.5 132V137M495.5 131V139M496.5 131V137M497.5 132V137M498.5 130V137M499.5 132V138M500.5 132V138M501.5 132V138M502.5 132V138M503.5 131V137M504.5 131V137M505.5 132V137M506.5 132V137M507.5 131V137M508.5 132V138M509.5 131V137M510.5 131V139M511.5 131V138M512.5 131V137M513.5 132V139M514.5 132V139M515.5 132V138M516.5 132V139M517.5 132V138M518.5 132V137M519.5 131V138M520.5 131V138M521.5 132V137M522.5 131V138M523.5 132V137M524.5 130V137M525.5 132V137M526.5 131V137M527.5 131V138M528.5 132V138M529.5 130V137M530.5 132V139M531.5 131V137M532.5 132V137M533.5 130V138M534.5 132V139M535.5 131V137M536.5 132V138M537.5 132V137M538.5 130V137M539.5 131V138M540.5 132V137M541.5 132V137M542.5 132V137M543.5 131V137M544.5 131V137M545.5 131V137M546.5 132V138M547.5 132V138M548.5 131V137M549.5 132V137M550.5 132V137M551.5 132V138M552.5 131V137M553.5 132V139M554.5 130V137M555.5 131V137M556.5 130V138M557.5 132V137M558.5 132V137M559.5 131V137M560.5 132V138M561.5 131V137M562.5 131V137M563.5 131V138M564.5 132V137M565.5 131V137M566.5 132V139M567.5 131V137M568.5 132V137M569.5 132V137M570.5 132V137M571.5 131V139M572.5 132V137M573.5 132V137M574.5 132V138M575.5 130V138M576.5 131V137M577.5 131V138M578.5 131V138M579.5 129V137M580.5 130V138M581.5 132V138M582.5 130V138M583.5 132V137M584.5 130V137M585.5 132V137M586.5 131V137M587.5 130V140M588.5 130V137M589.5 130V139M590.5 130V138M591.5 131V137M592.5 131V137M593.5 132V137M594.5 132V138M595.5 131V137M596.5 131V206M597.5 204V214M598.5 210V219M599.5 214V222M600.5 218V223M601.5 219V225M602.5 221V226M603.5 222V228M604.5 223V228M605.5 223V230M606.5 223V230M607.5 223V229M608.5 224V230M609.5 224V230M610.5 225V230M611.5 225V230M612.5 225V230M613.5 225V230M614.5 224V231M615.5 225V230M616.5 225V230M617.5 225V230M618.5 225V230M619.5 226V232M620.5 225V231M621.5 225V231M622.5 225V230M623.5 225V230M624.5 225V230M625.5 225V231M626.5 225V232M627.5 225V230M628.5 225V231M629.5 226V231M630.5 226V231M631.5 225V230M632.5 225V231M633.5 225V231M634.5 226V233M635.5 224V231M636.5 225V230M637.5 225V232M638.5 225V232M639.5 226V232M640.5 225V231M641.5 225V231M642.5 225V231M643.5 225V231M644.5 225V231M645.5 224V233M646.5 226V232M647.5 225V231M648.5 224V232M649.5 225V231M650.5 225V230M651.5 225V230M652.5 226V231M653.5 225V230M654.5 226V231M655.5 223V230" stroke="#00ffff" stroke-width="1" fill="none"/>
    <path d="M16.5 33V40M17.5 32V38M18.5 30V39M19.5 30V36M20.5 29V35M21.5 29V34M22.5 29V33M23.5 29V33M24.5 29V32M25.5 29V31M26.5 29V32M101.5 29V31M102.5 29V31M103.5 29V32M104.5 29V34M105.5 29V33M106.5 29V35M107.5 29V35M108.5 29V36M109.5 29V37M110.5 30V38M111.5 32V39M112.5 33V40M113.5 35V41M114.5 36V43M115.5 36V43M116.5 38V45M117.5 39V46M118.5 40V47M119.5 41V49M120.5 43V51M121.5 43V51M122.5 45V52M123.5 46V54M124.5 48V54M125.5 48V56M126.5 50V58M127.5 52V59M128.5 52V61M129.5 55V62M130.5 56V63M131.5 58V65M132.5 59V67M133.5 61V67M134.5 63V70M135.5 64V72M136.5 65V72M137.5 67V74M138.5 69V76M139.5 70V77M140.5 72V79M141.5 72V80M142.5 75V82M143.5 76V84M144.5 79V87M145.5 80V87M146.5 82V89M147.5 83V91M148.5 85V92M149.5 86V94M150.5 88V96M151.5 91V98M152.5 92V99M153.5 94V101M154.5 95V102M155.5 97V104M156.5 98V107M157.5 100V107M158.5 101V109M159.5 104V110M160.5 105V112M161.5 106V114M162.5 107V115M163.5 109V117M164.5 111V118M165.5 112V120M166.5 114V122M167.5 116V124M168.5 118V125M169.5 119V127M170.5 121V129M171.5 123V131M172.5 123V132M173.5 124V133M174.5 128V134M175.5 128V137M176.5 130V138M177.5 132V140M178.5 134V142M179.5 136V143M180.5 137V146M181.5 139V147M182.5 140V148M183.5 143V150M184.5 144V151M185.5 146V152M186.5 147V154M187.5 149V156M188.5 151V158M189.5 152V159M190.5 154V162M191.5 156V163M192.5 156V164M193.5 159V167M194.5 161V168M195.5 162V169M196.5 165V172M197.5 167V173M198.5 168V176M199.5 170V177M200.5 172V178M201.5 173V180M202.5 175V181M203.5 176V183M204.5 177V184M205.5 179V185M206.5 179V187M207.5 180V188M208.5 182V189M209.5 184V190M210.5 184V192M211.5 185V193M212.5 187V195M213.5 187V196M214.5 188V196M215.5 191V197M216.5 191V198M217.5 193V200M218.5 194V200M219.5 194V202M220.5 196V203M221.5 196V203M222.5 196V204M223.5 198V205M224.5 199V207M225.5 200V207M226.5 200V208M227.5 202V209M228.5 203V209M229.5 204V211M230.5 204V211M231.5 205V212M232.5 206V213M233.5 207V214M234.5 208V215M235.5 208V215M236.5 209V217M237.5 210V217M238.5 209V218M239.5 211V218M240.5 212V218M241.5 212V219M242.5 213V219M243.5 212V220M244.5 214V220M245.5 214V221M246.5 214V223M247.5 215V224M248.5 215V223M249.5 215V224M250.5 215V222M251.5 215V223M252.5 216V223M253.5 216V224M254.5 217V224M255.5 216V224M256.5 216V223M257.5 217V224M258.5 216V224M259.5 217V224M260.5 217V224M261.5 217V225M262.5 216V224M263.5 217V224M264.5 216V224M265.5 217V223M266.5 216V223M267.5 217V223M268.5 216V223M269.5 216V223M270.5 216V222M271.5 215V222M272.5 215V222M273.5 214V222M274.5 213V221M275.5 214V221M276.5 212V222M277.5 213V220M278.5 213V219M279.5 212V219M280.5 211V219M281.5 210V219M282.5 210V219M283.5 210V217M284.5 209V216M285.5 209V216M286.5 208V215M287.5 208V215M288.5 207V214M289.5 206V213M290.5 206V214M291.5 205V212M292.5 204V211M293.5 204V210M294.5 202V210M295.5 203V209M296.5 202V209M297.5 201V208M298.5 199V208M299.5 200V206M300.5 198V206M301.5 197V205M302.5 197V205M303.5 196V203M304.5 195V202M305.5 194V201M306.5 194V200M307.5 192V200M308.5 191V199M309.5 191V197M310.5 190V197M311.5 188V195M312.5 187V196M313.5 187V194M314.5 185V192M315.5 185V191M316.5 183V191M317.5 182V190M318.5 181V187M319.5 180V186M320.5 178V186M321.5 177V184M322.5 176V183M323.5 174V181M324.5 173V180M325.5 171V178M326.5 170V177M327.5 169V176M328.5 167V174M329.5 165V172M330.5 162V170M331.5 162V168M332.5 158V167M333.5 157V164M334.5 155V162M335.5 153V160M336.5 151V158M337.5 149V157M338.5 148V156M339.5 146V153M340.5 145V152M341.5 143V150M342.5 141V149M343.5 139V147M344.5 137V145M345.5 136V143M346.5 134V140M347.5 132V139M348.5 129V137M349.5 128V135M350.5 126V133M351.5 124V131M352.5 123V130M353.5 121V129M354.5 118V126M355.5 118V125M356.5 117V124M357.5 114V122M358.5 113V120M359.5 112V120M360.5 111V117M361.5 108V116M362.5 107V115M363.5 106V112M364.5 103V110M365.5 102V108M366.5 101V109M367.5 99V105M368.5 97V104M369.5 96V102M370.5 94V101M371.5 92V99M372.5 91V98M373.5 89V96M374.5 87V95M375.5 85V93M376.5 84V91M377.5 83V90M378.5 81V88M379.5 80V87M380.5 78V86M381.5 77V84M382.5 76V83M383.5 73V81M384.5 73V80M385.5 71V78M386.5 70V77M387.5 68V76M388.5 66V74M389.5 65V72M390.5 64V71M391.5 62V69M392.5 61V69M393.5 60V66M394.5 58V65M395.5 57V64M396.5 56V63M397.5 55V62M398.5 52V60M399.5 52V59M400.5 51V57M401.5 47V56M402.5 46V54M403.5 46V53M404.5 45V52M405.5 43V50M406.5 41V48M407.5 40V48M408.5 39V46M409.5 36V45M410.5 35V43M411.5 35V42M412.5 33V41M413.5 32V39M414.5 32V39M415.5 30V37M416.5 29V36M417.5 29V35M418.5 29V33M419.5 29V33M420.5 29V32M421.5 29V31M422.5 29V31M423.5 29V30M500.5 29V30M501.5 29V30M502.5 29V31M503.5 29V32M504.5 29V32M505.5 29V33M506.5 29V35M507.5 29V35M508.5 29V36M509.5 30V37M510.5 32V39M511.5 32V40M512.5 34V41M513.5 35V42M514.5 36V43M515.5 37V44M516.5 38V46M517.5 39V47M518.5 41V48M519.5 42V50M520.5 43V50M521.5 43V52M522.5 46V53M523.5 47V55M524.5 49V57M525.5 50V58M526.5 53V60M527.5 53V61M528.5 55V63M529.5 57V64M530.5 59V65M531.5 60V67M532.5 61V69M533.5 63V71M534.5 64V72M535.5 65V74M536.5 67V74M537.5 69V76M538.5 70V79M539.5 72V80M540.5 73V81M541.5 75V82M542.5 77V84M543.5 78V86M544.5 80V88M545.5 81V89M546.5 83V90M547.5 85V91M548.5 86V93M549.5 88V95M550.5 89V97M551.5 91V98M552.5 92V99M553.5 94V101M554.5 95V102M555.5 97V104M556.5 97V105M557.5 97V106M558.5 100V107M559.5 101V109M560.5 103V111M561.5 105V112M562.5 107V114M563.5 108V115M564.5 109V116M565.5 112V118M566.5 113V119M567.5 115V122M568.5 114V123M569.5 118V125M570.5 120V126M571.5 122V128M572.5 123V130M573.5 124V132M574.5 126V134M575.5 128V135M576.5 128V137M577.5 132V139M578.5 133V141M579.5 134V142M580.5 137V143M581.5 138V145M582.5 140V147M583.5 142V149M584.5 143V151M585.5 145V152M586.5 147V154M587.5 149V156M588.5 150V158M589.5 152V160M590.5 154V162M591.5 156V162M592.5 157V165M593.5 159V167M594.5 161V169M595.5 163V170M596.5 165V172M597.5 166V173M598.5 168V176M599.5 170V177M600.5 171V178M601.5 173V179M602.5 174V183M603.5 175V183M604.5 177V185M605.5 178V185M606.5 180V186M607.5 181V188M608.5 180V189M609.5 183V189M610.5 184V191M611.5 185V192M612.5 186V193M613.5 187V195M614.5 188V195M615.5 189V196M616.5 190V198M617.5 191V198M618.5 191V199M619.5 193V200M620.5 193V201M621.5 195V202M622.5 196V205M623.5 197V205M624.5 199V205M625.5 200V207M626.5 200V208M627.5 202V209M628.5 203V210M629.5 204V210M630.5 204V211M631.5 205V212M632.5 205V212M633.5 207V213M634.5 207V213M635.5 206V214M636.5 208V215M637.5 208V215M638.5 209V217M639.5 208V217M640.5 210V217M641.5 210V218M642.5 211V218M643.5 211V218M644.5 212V219M645.5 212V221M646.5 213V220M647.5 213V221M648.5 213V221M649.5 213V221M650.5 215V222M651.5 214V222M652.5 215V222M653.5 216V223M654.5 216V223M655.5 216V224" stroke="#ff1400" stroke-width="1" fill="none"/>
    <path d="M16 29H25L16 38Z" fill="#ff1400"/>
    <path d="M16.5 142V151M17.5 143V149M18.5 143V149M19.5 142V149M20.5 142V148M21.5 142V149M22.5 140V149M23.5 142V149M24.5 142V150M25.5 142V149M26.5 142V151M27.5 140V149M28.5 141V151M29.5 140V150M30.5 141V149M31.5 142V149M32.5 143V149M33.5 142V149M34.5 142V149M35.5 142V151M36.5 140V149M37.5 142V152M38.5 141V150M39.5 141V150M40.5 143V150M41.5 143V152M42.5 142V150M43.5 142V149M44.5 143V149M45.5 141V151M46.5 143V150M47.5 143V149M48.5 143V152M49.5 143V150M50.5 143V150M51.5 142V150M52.5 141V149M53.5 143V150M54.5 143V150M55.5 143V150M56.5 143V150M57.5 143V150M58.5 141V151M59.5 143V151M60.5 141V152M61.5 144V151M62.5 144V151M63.5 144V150M64.5 143V151M65.5 143V150M66.5 144V151M67.5 144V151M68.5 144V151M69.5 144V152M70.5 144V152M71.5 144V153M72.5 142V153M73.5 144V154M74.5 143V152M75.5 144V154M76.5 145V153M77.5 144V152M78.5 145V152M79.5 145V154M80.5 145V155M81.5 145V152M82.5 145V152M83.5 143V152M84.5 145V152M85.5 145V154M86.5 146V153M87.5 145V154M88.5 147V153M89.5 147V153M90.5 147V154M91.5 147V156M92.5 145V154M93.5 147V154M94.5 147V155M95.5 147V154M96.5 146V156M97.5 147V154M98.5 147V155M99.5 148V155M100.5 146V157M101.5 146V157M102.5 148V156M103.5 149V157M104.5 148V155M105.5 149V157M106.5 149V156M107.5 148V157M108.5 147V156M109.5 148V156M110.5 149V157M111.5 149V156M112.5 149V156M113.5 149V156M114.5 149V157M115.5 149V156M116.5 150V158M117.5 150V157M118.5 150V157M119.5 150V157M120.5 150V157M121.5 150V157M122.5 149V157M123.5 150V157M124.5 148V157M125.5 148V157M126.5 151V158M127.5 150V159M128.5 151V158M129.5 151V160M130.5 151V158M131.5 151V159M132.5 151V159M133.5 151V159M134.5 151V159M135.5 150V159M136.5 151V159M137.5 151V159M138.5 151V159M139.5 151V160M140.5 151V159M141.5 150V159M142.5 149V159M143.5 152V160M144.5 149V162M145.5 152V161M146.5 152V161M147.5 151V159M148.5 150V159M149.5 153V160M150.5 153V159M151.5 151V159M152.5 153V160M153.5 153V159M154.5 153V159M155.5 152V159M156.5 153V162M157.5 153V159M158.5 153V160M159.5 153V160M160.5 150V160M161.5 152V160M162.5 153V160M163.5 150V161M164.5 151V161M165.5 152V160M166.5 154V161M167.5 153V160M168.5 152V160M169.5 153V163M170.5 154V162M171.5 153V163M172.5 154V161M173.5 154V161M174.5 155V161M175.5 154V161M176.5 154V161M177.5 154V163M178.5 152V164M179.5 154V161M180.5 154V162M181.5 154V161M182.5 154V162M183.5 153V164M184.5 155V162M185.5 152V162M186.5 155V162M187.5 154V162M188.5 155V165M189.5 153V163M190.5 156V165M191.5 155V163M192.5 155V164M193.5 155V162M194.5 153V163M195.5 156V162M196.5 155V164M197.5 155V162M198.5 155V162M199.5 156V166M200.5 154V162M201.5 153V163M202.5 153V163M203.5 155V162M204.5 155V166M205.5 155V164M206.5 156V163M207.5 154V163M208.5 156V162M209.5 153V163M210.5 156V164M211.5 156V163M212.5 156V162M213.5 154V162M214.5 155V163M215.5 155V163M216.5 156V162M217.5 156V162M218.5 155V163M219.5 155V163M220.5 155V163M221.5 155V163M222.5 156V163M223.5 153V163M224.5 156V163M225.5 156V163M226.5 156V162M227.5 156V163M228.5 156V163M229.5 156V165M230.5 154V164M231.5 156V163M232.5 155V163M233.5 156V163M234.5 156V163M235.5 156V165M236.5 156V163M237.5 156V163M238.5 156V165M239.5 155V163M240.5 154V163M241.5 153V163M242.5 155V165M243.5 153V163M244.5 156V164M245.5 154V166M246.5 156V163M247.5 155V164M248.5 156V162M249.5 156V163M250.5 156V165M251.5 155V163M252.5 156V165M253.5 155V163M254.5 154V163M255.5 153V164M256.5 155V163M257.5 156V165M258.5 154V165M259.5 154V163M260.5 154V163M261.5 156V166M262.5 153V162M263.5 155V162M264.5 156V163M265.5 155V163M266.5 155V164M267.5 155V163M268.5 155V163M269.5 155V164M270.5 155V162M271.5 155V162M272.5 154V162M273.5 153V162M274.5 153V162M275.5 155V162M276.5 154V162M277.5 153V164M278.5 155V162M279.5 153V162M280.5 154V164M281.5 154V161M282.5 154V161M283.5 154V162M284.5 151V163M285.5 152V161M286.5 154V161M287.5 154V161M288.5 153V161M289.5 154V162M290.5 154V161M291.5 153V161M292.5 153V162M293.5 153V163M294.5 153V160M295.5 151V160M296.5 152V160M297.5 152V160M298.5 152V160M299.5 152V159M300.5 152V159M301.5 151V159M302.5 151V159M303.5 152V158M304.5 151V158M305.5 152V159M306.5 148V159M307.5 151V159M308.5 151V158M309.5 151V159M310.5 151V158M311.5 151V157M312.5 150V157M313.5 150V158M314.5 150V157M315.5 148V157M316.5 148V157M317.5 149V159M318.5 150V156M319.5 149V157M320.5 148V158M321.5 149V157M322.5 149V157M323.5 149V156M324.5 149V156M325.5 149V156M326.5 149V158M327.5 149V156M328.5 148V158M329.5 148V155M330.5 147V155M331.5 147V155M332.5 145V154M333.5 148V155M334.5 144V154M335.5 147V154M336.5 147V153M337.5 146V154M338.5 146V155M339.5 146V154M340.5 146V153M341.5 145V153M342.5 145V154M343.5 146V153M344.5 143V153M345.5 146V153M346.5 145V152M347.5 145V153M348.5 145V152M349.5 145V152M350.5 144V153M351.5 144V153M352.5 145V152M353.5 145V155M354.5 145V152M355.5 143V154M356.5 144V151M357.5 143V152M358.5 144V153M359.5 141V152M360.5 144V153M361.5 143V151M362.5 144V151M363.5 142V153M364.5 144V151M365.5 144V153M366.5 144V151M367.5 144V153M368.5 143V153M369.5 144V151M370.5 144V151M371.5 144V151M372.5 143V151M373.5 143V151M374.5 144V151M375.5 143V150M376.5 143V150M377.5 143V150M378.5 144V152M379.5 144V150M380.5 144V151M381.5 141V153M382.5 142V150M383.5 144V150M384.5 142V151M385.5 143V150M386.5 143V151M387.5 142V150M388.5 143V150M389.5 142V151M390.5 143V150M391.5 143V152M392.5 144V152M393.5 143V151M394.5 141V151M395.5 143V150M396.5 143V150M397.5 143V152M398.5 142V150M399.5 143V152M400.5 142V150M401.5 142V149M402.5 141V150M403.5 140V150M404.5 141V150M405.5 142V151M406.5 142V153M407.5 142V149M408.5 142V150M409.5 142V149M410.5 140V149M411.5 142V150M412.5 142V151M413.5 142V150M414.5 142V149M415.5 143V151M416.5 143V151M417.5 143V149M418.5 141V150M419.5 143V150M420.5 142V152M421.5 143V151M422.5 143V149M423.5 143V150M424.5 143V149M425.5 143V152M426.5 142V152M427.5 143V149M428.5 141V152M429.5 141V150M430.5 142V150M431.5 142V150M432.5 142V151M433.5 140V150M434.5 143V153M435.5 143V149M436.5 140V150M437.5 140V150M438.5 143V150M439.5 143V149M440.5 143V152M441.5 143V150M442.5 143V150M443.5 142V152M444.5 143V152M445.5 143V150M446.5 140V150M447.5 142V150M448.5 143V151M449.5 143V151M450.5 142V151M451.5 144V150M452.5 142V153M453.5 144V150M454.5 143V152M455.5 143V150M456.5 143V151M457.5 143V151M458.5 141V150M459.5 143V150M460.5 143V150M461.5 141V151M462.5 144V150M463.5 142V150M464.5 141V151M465.5 141V151M466.5 143V152M467.5 143V151M468.5 144V153M469.5 144V153M470.5 143V151M471.5 144V154M472.5 144V152M473.5 145V152M474.5 145V152M475.5 146V152M476.5 145V155M477.5 145V153M478.5 145V154M479.5 145V152M480.5 146V152M481.5 145V153M482.5 146V154M483.5 146V156M484.5 147V153M485.5 147V156M486.5 144V156M487.5 145V156M488.5 146V155M489.5 144V154M490.5 147V157M491.5 148V157M492.5 147V155M493.5 147V156M494.5 147V155M495.5 145V154M496.5 148V155M497.5 148V155M498.5 147V155M499.5 147V155M500.5 148V154M501.5 148V155M502.5 148V157M503.5 148V156M504.5 149V155M505.5 149V155M506.5 148V157M507.5 148V157M508.5 149V156M509.5 149V155M510.5 148V156M511.5 147V158M512.5 149V156M513.5 149V157M514.5 148V157M515.5 150V158M516.5 149V156M517.5 149V156M518.5 149V156M519.5 146V157M520.5 150V157M521.5 149V157M522.5 149V158M523.5 147V160M524.5 150V156M525.5 150V157M526.5 148V158M527.5 151V159M528.5 150V158M529.5 150V157M530.5 149V157M531.5 150V158M532.5 151V160M533.5 151V158M534.5 151V157M535.5 150V158M536.5 148V158M537.5 152V161M538.5 150V158M539.5 151V159M540.5 151V158M541.5 151V159M542.5 152V159M543.5 150V160M544.5 152V159M545.5 152V159M546.5 152V159M547.5 152V160M548.5 152V161M549.5 152V160M550.5 151V161M551.5 152V160M552.5 152V159M553.5 153V159M554.5 151V162M555.5 153V160M556.5 153V160M557.5 153V160M558.5 153V160M559.5 151V160M560.5 153V162M561.5 153V161M562.5 154V161M563.5 153V160M564.5 153V162M565.5 154V163M566.5 154V161M567.5 151V164M568.5 154V161M569.5 154V161M570.5 154V162M571.5 154V163M572.5 154V162M573.5 154V161M574.5 154V161M575.5 152V162M576.5 155V161M577.5 155V161M578.5 152V162M579.5 153V161M580.5 155V162M581.5 152V162M582.5 153V164M583.5 155V162M584.5 155V162M585.5 153V162M586.5 155V162M587.5 154V162M588.5 152V165M589.5 155V162M590.5 155V165M591.5 155V162M592.5 155V163M593.5 156V162M594.5 156V162M595.5 156V163M596.5 155V162M597.5 155V162M598.5 155V162M599.5 155V162M600.5 156V162M601.5 155V163M602.5 155V162M603.5 154V163M604.5 155V163M605.5 155V164M606.5 154V163M607.5 156V163M608.5 156V164M609.5 156V163M610.5 156V164M611.5 155V164M612.5 156V163M613.5 156V165M614.5 153V163M615.5 155V164M616.5 156V163M617.5 155V163M618.5 156V163M619.5 156V163M620.5 156V164M621.5 156V163M622.5 156V162M623.5 156V163M624.5 155V162M625.5 156V163M626.5 154V165M627.5 156V162M628.5 155V163M629.5 156V165M630.5 156V164M631.5 154V162M632.5 156V163M633.5 155V163M634.5 156V164M635.5 154V163M636.5 155V164M637.5 155V164M638.5 155V164M639.5 153V164M640.5 157V165M641.5 156V165M642.5 156V162M643.5 155V166M644.5 156V163M645.5 156V163M646.5 154V162M647.5 156V164M648.5 154V163M649.5 155V163M650.5 156V164M651.5 156V166M652.5 154V166M653.5 156V163M654.5 154V164M655.5 156V163" stroke="#00ff00" stroke-width="1" fill="none"/>
    <!-- trigger level marker -->
    <path d="M642.500 160.500L656 152.800V168.200Z" fill="#ffff00"/>
  </g>

  <!-- time position label -->
  <path d="M300 28H370V42L367 45H341L335.5 52L330 45H303L300 42Z" fill="#3c6cf5"/>
  <path d="M300.500 29V42L303 44.500H330L335.500 51.500L341 44.500H367L369.500 42V29" stroke="#5f9cff" stroke-width="1" fill="none"/>
  <path d="M300 28.500H370" stroke="#bfe0ff" stroke-width="1"/>
  <text class="ar" x="335.300" y="42.600" font-size="16" fill="#fff" text-anchor="middle" textLength="46.500" lengthAdjust="spacingAndGlyphs">0.000s</text>

  <!-- channel zero markers (CH3 hidden under CH4) -->
  <path d="M0 233.5H9L15 239.5V241L9 247.5H0Z" fill="#ff0000"/>
  <path d="M0 232H9L15 238V240L9 246H0Z" fill="#00ff00"/>
  <text class="ar" x="5.6" y="244" font-size="12.5" font-weight="bold" fill="#2a3cff" text-anchor="middle">4</text>

  <!-- ======================= top bar ======================= -->
  <text x="15.800" y="20.800" font-family="'DejaVu Sans','Liberation Sans',sans-serif" font-size="18.900" font-weight="bold" fill="#ffff00" textLength="78.500" lengthAdjust="spacingAndGlyphs">Hantek</text>

  <!-- icon 1: two sines -->
  <rect x="115.5" y="3.5" width="22" height="20" fill="#000" stroke="#a6a2a6"/>
  <polyline points="116.20,8.06 116.45,7.70 116.70,7.37 116.95,7.06 117.20,6.79 117.45,6.55 117.70,6.36 117.95,6.21 118.20,6.11 118.45,6.06 118.70,6.06 118.95,6.11 119.20,6.21 119.45,6.36 119.70,6.55 119.95,6.79 120.20,7.06 120.45,7.37 120.70,7.70 120.95,8.06 121.20,8.43 121.45,8.80 121.70,9.17 121.95,9.54 122.20,9.90 122.45,10.23 122.70,10.54 122.95,10.81 123.20,11.05 123.45,11.24 123.70,11.39 123.95,11.49 124.20,11.54 124.45,11.54 124.70,11.49 124.95,11.39 125.20,11.24 125.45,11.05 125.70,10.81 125.95,10.54 126.20,10.23 126.45,9.90 126.70,9.54 126.95,9.17 127.20,8.80 127.45,8.43 127.70,8.06 127.95,7.70 128.20,7.37 128.45,7.06 128.70,6.79 128.95,6.55 129.20,6.36 129.45,6.21 129.70,6.11 129.95,6.06 130.20,6.06 130.45,6.11 130.70,6.21 130.95,6.36 131.20,6.55 131.45,6.79 131.70,7.06 131.95,7.37 132.20,7.70 132.45,8.06 132.70,8.43 132.95,8.80 133.20,9.17 133.45,9.54 133.70,9.90 133.95,10.23 134.20,10.54 134.45,10.81 134.70,11.05 134.95,11.24 135.20,11.39 135.45,11.49 135.70,11.54 135.95,11.54 136.20,11.49 136.45,11.39 136.70,11.24 136.95,11.05 137.20,10.81" stroke="#ffff00" stroke-width="2.300" fill="none"/>
  <polyline points="116.20,16.86 116.45,16.50 116.70,16.17 116.95,15.86 117.20,15.59 117.45,15.35 117.70,15.16 117.95,15.01 118.20,14.91 118.45,14.86 118.70,14.86 118.95,14.91 119.20,15.01 119.45,15.16 119.70,15.35 119.95,15.59 120.20,15.86 120.45,16.17 120.70,16.50 120.95,16.86 121.20,17.23 121.45,17.60 121.70,17.97 121.95,18.34 122.20,18.70 122.45,19.03 122.70,19.34 122.95,19.61 123.20,19.85 123.45,20.04 123.70,20.19 123.95,20.29 124.20,20.34 124.45,20.34 124.70,20.29 124.95,20.19 125.20,20.04 125.45,19.85 125.70,19.61 125.95,19.34 126.20,19.03 126.45,18.70 126.70,18.34 126.95,17.97 127.20,17.60 127.45,17.23 127.70,16.86 127.95,16.50 128.20,16.17 128.45,15.86 128.70,15.59 128.95,15.35 129.20,15.16 129.45,15.01 129.70,14.91 129.95,14.86 130.20,14.86 130.45,14.91 130.70,15.01 130.95,15.16 131.20,15.35 131.45,15.59 131.70,15.86 131.95,16.17 132.20,16.50 132.45,16.86 132.70,17.23 132.95,17.60 133.20,17.97 133.45,18.34 133.70,18.70 133.95,19.03 134.20,19.34 134.45,19.61 134.70,19.85 134.95,20.04 135.20,20.19 135.45,20.29 135.70,20.34 135.95,20.34 136.20,20.29 136.45,20.19 136.70,20.04 136.95,19.85 137.20,19.61" stroke="#00ffff" stroke-width="2.300" fill="none"/>
  <!-- icon 2: vector line -->
  <rect x="140.500" y="3.500" width="22" height="20" fill="#000" stroke="#a6a2a6"/>
  <path d="M144.300 20.800L158.700 5.600" stroke="#00f000" stroke-width="2.300" fill="none"/>
  <!-- icon 3: persistence -->
  <rect x="165.500" y="3.500" width="22" height="20" fill="#000" stroke="#a6a2a6"/>
  <filter id="bl" x="-20%" y="-20%" width="140%" height="140%"><feGaussianBlur stdDeviation="0.55"/></filter>
  <g filter="url(#bl)">
    <path d="M168 21.500V13.500H172.500V7.500L174.500 5.500H180.500L183 9V15H179.500L177.500 21.500Z" fill="#5c5c5c"/>
    <path d="M169.500 21V14M171.500 21V13.500M173.500 21V9M175.500 20V6.500M177.500 18V6M179.500 14V6.500M181.500 14V8.500" stroke="#9a9a9a" stroke-width="1" fill="none"/>
  </g>
  <!-- empty inset -->
  <path d="M233 2.500H192.500L190.500 4.500V21.500L192.800 23.800" stroke="#2e2a30" stroke-width="1.100" fill="none"/>

  <!-- pulse icon -->
  <path d="M241 21.500H247.500M245.500 21.500V8Q245.500 4.500 248.500 4.500H253.500Q256.500 4.500 256.500 8V22.500M247.400 21.500V8.500Q247.400 6.500 249.300 6.500H252.700Q254.600 6.500 254.600 8.500V22.500M254.500 20.500H262" stroke="#d0ffff" stroke-width="1.400" fill="none"/>
  <path d="M243.500 17V24M248.200 3V8.700M250 3V8.700M251.800 3V8.700M253.600 3V8.700M257.500 18V22.500M259.300 18V22.500M261 18V22" stroke="#d0ffff" stroke-width="1.100" fill="none"/>
  <!-- T -->
  <path d="M268.200 4.300H281.800V7.400H277V21.300H273.200V7.400H268.200Z" fill="#00f000"/>
  <!-- key -->
  <g fill="#444643">
    <rect x="290" y="11" width="17" height="4"/>
    <rect x="292" y="15" width="3" height="4"/>
    <rect x="297" y="15" width="3" height="3"/>
    <rect x="301" y="15" width="2" height="4"/>
    <path d="M309.500 8.500c-5 0-5 12 0 12s5-12 0-12zM309.500 11.500c1.500 0 1.500 6 0 6s-1.500-6 0-6z" fill-rule="evenodd"/>
  </g>
  <!-- floppy -->
  <path d="M316 3.500H335V22.500H318.500L316 20Z" fill="#6c6c86" stroke="#dce0ff" stroke-width="1"/>
  <rect x="322" y="4" width="9" height="8" fill="#555753"/>
  <path d="M321 4V12.500H332V4" stroke="#24248a" stroke-width="2" fill="none"/>
  <rect x="321.500" y="15.300" width="11" height="7" fill="#c4f0ff"/>
  <rect x="321.500" y="15.300" width="1.300" height="7" fill="#6c6c86"/>
  <rect x="323" y="16.300" width="2" height="5.200" fill="#1e1e5a"/>
  <!-- printer -->
  <g fill="none" stroke="#444643">
    <rect x="347" y="4.500" width="10" height="9" stroke-width="2"/>
    <path d="M349 6.500H355M349 9H355M349 11.500H355" stroke-width="1" stroke="#4c4e4a"/>
    <rect x="343" y="14.500" width="17.500" height="7" stroke-width="2.600" fill="#555753"/>
    <rect x="345.500" y="16.700" width="13" height="2.800" fill="#444643" stroke="none"/>
  </g>
  <!-- separator -->
  <path d="M366.800 1V27" stroke="#1c1c1c" stroke-width="1.600"/>

  <!-- memory overview -->
  <rect x="393.600" y="3.600" width="112.800" height="20.800" fill="#000" stroke="#6a6aa8" stroke-width="1.200"/>
  <clipPath id="ovall"><rect x="394" y="4" width="112" height="20"/></clipPath>
  <clipPath id="ovwin"><rect x="406" y="5" width="87" height="17"/></clipPath>
  <polyline points="394.00,17.45 394.12,18.20 394.25,18.82 394.38,19.25 394.50,19.49 394.62,19.50 394.75,19.27 394.88,18.81 395.00,18.13 395.12,17.25 395.25,16.20 395.38,15.04 395.50,13.80 395.62,12.54 395.75,11.32 395.88,10.19 396.00,9.20 396.12,8.40 396.25,7.82 396.38,7.48 396.50,7.40 396.62,7.57 396.75,8.00 396.88,8.64 397.00,9.47 397.12,10.45 397.25,11.53 397.38,12.67 397.50,13.80 397.62,14.89 397.75,15.88 397.88,16.74 398.00,17.45 398.12,17.97 398.25,18.30 398.38,18.44 398.50,18.39 398.62,18.17 398.75,17.79 398.88,17.28 399.00,16.67 399.12,15.99 399.25,15.27 399.38,14.53 399.50,13.80 399.62,13.11 399.75,12.47 399.88,11.91 400.00,11.43 400.12,11.05 400.25,10.77 400.38,10.61 400.50,10.55 400.62,10.61 400.75,10.77 400.88,11.05 401.00,11.43 401.12,11.91 401.25,12.47 401.38,13.11 401.50,13.80 401.62,14.53 401.75,15.27 401.88,15.99 402.00,16.67 402.12,17.28 402.25,17.79 402.38,18.17 402.50,18.39 402.62,18.44 402.75,18.30 402.88,17.97 403.00,17.45 403.12,16.74 403.25,15.88 403.38,14.89 403.50,13.80 403.62,12.67 403.75,11.53 403.88,10.45 404.00,9.47 404.12,8.64 404.25,8.00 404.38,7.57 404.50,7.40 404.62,7.48 404.75,7.82 404.88,8.40 405.00,9.20 405.12,10.19 405.25,11.32 405.38,12.54 405.50,13.80 405.62,15.04 405.75,16.20 405.88,17.25 406.00,18.13 406.12,18.81 406.25,19.27 406.38,19.50 406.50,19.49 406.62,19.25 406.75,18.82 406.88,18.20 407.00,17.45 407.12,16.59 407.25,15.67 407.38,14.72 407.50,13.80 407.62,12.93 407.75,12.15 407.88,11.47 408.00,10.93 408.12,10.52 408.25,10.26 408.38,10.15 408.50,10.17 408.62,10.32 408.75,10.60 408.88,10.97 409.00,11.43 409.12,11.96 409.25,12.55 409.38,13.16 409.50,13.80 409.62,14.44 409.75,15.05 409.88,15.64 410.00,16.17 410.12,16.63 410.25,17.00 410.38,17.28 410.50,17.43 410.62,17.45 410.75,17.34 410.88,17.08 411.00,16.67 411.12,16.13 411.25,15.45 411.38,14.67 411.50,13.80 411.62,12.88 411.75,11.93 411.88,11.01 412.00,10.15 412.12,9.40 412.25,8.78 412.38,8.35 412.50,8.11 412.62,8.10 412.75,8.33 412.88,8.79 413.00,9.47 413.12,10.35 413.25,11.40 413.38,12.56 413.50,13.80 413.62,15.06 413.75,16.28 413.88,17.41 414.00,18.40 414.12,19.20 414.25,19.78 414.38,20.12 414.50,20.20 414.62,20.03 414.75,19.60 414.88,18.96 415.00,18.13 415.12,17.15 415.25,16.07 415.38,14.93 415.50,13.80 415.62,12.71 415.75,11.72 415.88,10.86 416.00,10.15 416.12,9.63 416.25,9.30 416.38,9.16 416.50,9.21 416.62,9.43 416.75,9.81 416.88,10.32 417.00,10.93 417.12,11.61 417.25,12.33 417.38,13.07 417.50,13.80 417.62,14.49 417.75,15.13 417.88,15.69 418.00,16.17 418.12,16.55 418.25,16.83 418.38,16.99 418.50,17.05 418.62,16.99 418.75,16.83 418.88,16.55 419.00,16.17 419.12,15.69 419.25,15.13 419.38,14.49 419.50,13.80 419.62,13.07 419.75,12.33 419.88,11.61 420.00,10.93 420.12,10.32 420.25,9.81 420.38,9.43 420.50,9.21 420.62,9.16 420.75,9.30 420.88,9.63 421.00,10.15 421.12,10.86 421.25,11.72 421.38,12.71 421.50,13.80 421.62,14.93 421.75,16.07 421.88,17.15 422.00,18.13 422.12,18.96 422.25,19.60 422.38,20.03 422.50,20.20 422.62,20.12 422.75,19.78 422.88,19.20 423.00,18.40 423.12,17.41 423.25,16.28 423.38,15.06 423.50,13.80 423.62,12.56 423.75,11.40 423.88,10.35 424.00,9.47 424.12,8.79 424.25,8.33 424.38,8.10 424.50,8.11 424.62,8.35 424.75,8.78 424.88,9.40 425.00,10.15 425.12,11.01 425.25,11.93 425.38,12.88 425.50,13.80 425.62,14.67 425.75,15.45 425.88,16.13 426.00,16.67 426.12,17.08 426.25,17.34 426.38,17.45 426.50,17.43 426.62,17.28 426.75,17.00 426.88,16.63 427.00,16.17 427.12,15.64 427.25,15.05 427.38,14.44 427.50,13.80 427.62,13.16 427.75,12.55 427.88,11.96 428.00,11.43 428.12,10.97 428.25,10.60 428.38,10.32 428.50,10.17 428.62,10.15 428.75,10.26 428.88,10.52 429.00,10.93 429.12,11.47 429.25,12.15 429.38,12.93 429.50,13.80 429.62,14.72 429.75,15.67 429.88,16.59 430.00,17.45 430.12,18.20 430.25,18.82 430.38,19.25 430.50,19.49 430.62,19.50 430.75,19.27 430.88,18.81 431.00,18.13 431.12,17.25 431.25,16.20 431.38,15.04 431.50,13.80 431.62,12.54 431.75,11.32 431.88,10.19 432.00,9.20 432.12,8.40 432.25,7.82 432.38,7.48 432.50,7.40 432.62,7.57 432.75,8.00 432.88,8.64 433.00,9.47 433.12,10.45 433.25,11.53 433.38,12.67 433.50,13.80 433.62,14.89 433.75,15.88 433.88,16.74 434.00,17.45 434.12,17.97 434.25,18.30 434.38,18.44 434.50,18.39 434.62,18.17 434.75,17.79 434.88,17.28 435.00,16.67 435.12,15.99 435.25,15.27 435.38,14.53 435.50,13.80 435.62,13.11 435.75,12.47 435.88,11.91 436.00,11.43 436.12,11.05 436.25,10.77 436.38,10.61 436.50,10.55 436.62,10.61 436.75,10.77 436.88,11.05 437.00,11.43 437.12,11.91 437.25,12.47 437.38,13.11 437.50,13.80 437.62,14.53 437.75,15.27 437.88,15.99 438.00,16.67 438.12,17.28 438.25,17.79 438.38,18.17 438.50,18.39 438.62,18.44 438.75,18.30 438.88,17.97 439.00,17.45 439.12,16.74 439.25,15.88 439.38,14.89 439.50,13.80 439.62,12.67 439.75,11.53 439.88,10.45 440.00,9.47 440.12,8.64 440.25,8.00 440.38,7.57 440.50,7.40 440.62,7.48 440.75,7.82 440.88,8.40 441.00,9.20 441.12,10.19 441.25,11.32 441.38,12.54 441.50,13.80 441.62,15.04 441.75,16.20 441.88,17.25 442.00,18.13 442.12,18.81 442.25,19.27 442.38,19.50 442.50,19.49 442.62,19.25 442.75,18.82 442.88,18.20 443.00,17.45 443.12,16.59 443.25,15.67 443.38,14.72 443.50,13.80 443.62,12.93 443.75,12.15 443.88,11.47 444.00,10.93 444.12,10.52 444.25,10.26 444.38,10.15 444.50,10.17 444.62,10.32 444.75,10.60 444.88,10.97 445.00,11.43 445.12,11.96 445.25,12.55 445.38,13.16 445.50,13.80 445.62,14.44 445.75,15.05 445.88,15.64 446.00,16.17 446.12,16.63 446.25,17.00 446.38,17.28 446.50,17.43 446.62,17.45 446.75,17.34 446.88,17.08 447.00,16.67 447.12,16.13 447.25,15.45 447.38,14.67 447.50,13.80 447.62,12.88 447.75,11.93 447.88,11.01 448.00,10.15 448.12,9.40 448.25,8.78 448.38,8.35 448.50,8.11 448.62,8.10 448.75,8.33 448.88,8.79 449.00,9.47 449.12,10.35 449.25,11.40 449.38,12.56 449.50,13.80 449.62,15.06 449.75,16.28 449.88,17.41 450.00,18.40 450.12,19.20 450.25,19.78 450.38,20.12 450.50,20.20 450.62,20.03 450.75,19.60 450.88,18.96 451.00,18.13 451.12,17.15 451.25,16.07 451.38,14.93 451.50,13.80 451.62,12.71 451.75,11.72 451.88,10.86 452.00,10.15 452.12,9.63 452.25,9.30 452.38,9.16 452.50,9.21 452.62,9.43 452.75,9.81 452.88,10.32 453.00,10.93 453.12,11.61 453.25,12.33 453.38,13.07 453.50,13.80 453.62,14.49 453.75,15.13 453.88,15.69 454.00,16.17 454.12,16.55 454.25,16.83 454.38,16.99 454.50,17.05 454.62,16.99 454.75,16.83 454.88,16.55 455.00,16.17 455.12,15.69 455.25,15.13 455.38,14.49 455.50,13.80 455.62,13.07 455.75,12.33 455.88,11.61 456.00,10.93 456.12,10.32 456.25,9.81 456.38,9.43 456.50,9.21 456.62,9.16 456.75,9.30 456.88,9.63 457.00,10.15 457.12,10.86 457.25,11.72 457.38,12.71 457.50,13.80 457.62,14.93 457.75,16.07 457.88,17.15 458.00,18.13 458.12,18.96 458.25,19.60 458.38,20.03 458.50,20.20 458.62,20.12 458.75,19.78 458.88,19.20 459.00,18.40 459.12,17.41 459.25,16.28 459.38,15.06 459.50,13.80 459.62,12.56 459.75,11.40 459.88,10.35 460.00,9.47 460.12,8.79 460.25,8.33 460.38,8.10 460.50,8.11 460.62,8.35 460.75,8.78 460.88,9.40 461.00,10.15 461.12,11.01 461.25,11.93 461.38,12.88 461.50,13.80 461.62,14.67 461.75,15.45 461.88,16.13 462.00,16.67 462.12,17.08 462.25,17.34 462.38,17.45 462.50,17.43 462.62,17.28 462.75,17.00 462.88,16.63 463.00,16.17 463.12,15.64 463.25,15.05 463.38,14.44 463.50,13.80 463.62,13.16 463.75,12.55 463.88,11.96 464.00,11.43 464.12,10.97 464.25,10.60 464.38,10.32 464.50,10.17 464.62,10.15 464.75,10.26 464.88,10.52 465.00,10.93 465.12,11.47 465.25,12.15 465.38,12.93 465.50,13.80 465.62,14.72 465.75,15.67 465.88,16.59 466.00,17.45 466.12,18.20 466.25,18.82 466.38,19.25 466.50,19.49 466.62,19.50 466.75,19.27 466.88,18.81 467.00,18.13 467.12,17.25 467.25,16.20 467.38,15.04 467.50,13.80 467.62,12.54 467.75,11.32 467.88,10.19 468.00,9.20 468.12,8.40 468.25,7.82 468.38,7.48 468.50,7.40 468.62,7.57 468.75,8.00 468.88,8.64 469.00,9.47 469.12,10.45 469.25,11.53 469.38,12.67 469.50,13.80 469.62,14.89 469.75,15.88 469.88,16.74 470.00,17.45 470.12,17.97 470.25,18.30 470.38,18.44 470.50,18.39 470.62,18.17 470.75,17.79 470.88,17.28 471.00,16.67 471.12,15.99 471.25,15.27 471.38,14.53 471.50,13.80 471.62,13.11 471.75,12.47 471.88,11.91 472.00,11.43 472.12,11.05 472.25,10.77 472.38,10.61 472.50,10.55 472.62,10.61 472.75,10.77 472.88,11.05 473.00,11.43 473.12,11.91 473.25,12.47 473.38,13.11 473.50,13.80 473.62,14.53 473.75,15.27 473.88,15.99 474.00,16.67 474.12,17.28 474.25,17.79 474.38,18.17 474.50,18.39 474.62,18.44 474.75,18.30 474.88,17.97 475.00,17.45 475.12,16.74 475.25,15.88 475.38,14.89 475.50,13.80 475.62,12.67 475.75,11.53 475.88,10.45 476.00,9.47 476.12,8.64 476.25,8.00 476.38,7.57 476.50,7.40 476.62,7.48 476.75,7.82 476.88,8.40 477.00,9.20 477.12,10.19 477.25,11.32 477.38,12.54 477.50,13.80 477.62,15.04 477.75,16.20 477.88,17.25 478.00,18.13 478.12,18.81 478.25,19.27 478.38,19.50 478.50,19.49 478.62,19.25 478.75,18.82 478.88,18.20 479.00,17.45 479.12,16.59 479.25,15.67 479.38,14.72 479.50,13.80 479.62,12.93 479.75,12.15 479.88,11.47 480.00,10.93 480.12,10.52 480.25,10.26 480.38,10.15 480.50,10.17 480.62,10.32 480.75,10.60 480.88,10.97 481.00,11.43 481.12,11.96 481.25,12.55 481.38,13.16 481.50,13.80 481.62,14.44 481.75,15.05 481.88,15.64 482.00,16.17 482.12,16.63 482.25,17.00 482.38,17.28 482.50,17.43 482.62,17.45 482.75,17.34 482.88,17.08 483.00,16.67 483.12,16.13 483.25,15.45 483.38,14.67 483.50,13.80 483.62,12.88 483.75,11.93 483.88,11.01 484.00,10.15 484.12,9.40 484.25,8.78 484.38,8.35 484.50,8.11 484.62,8.10 484.75,8.33 484.88,8.79 485.00,9.47 485.12,10.35 485.25,11.40 485.38,12.56 485.50,13.80 485.62,15.06 485.75,16.28 485.88,17.41 486.00,18.40 486.12,19.20 486.25,19.78 486.38,20.12 486.50,20.20 486.62,20.03 486.75,19.60 486.88,18.96 487.00,18.13 487.12,17.15 487.25,16.07 487.38,14.93 487.50,13.80 487.62,12.71 487.75,11.72 487.88,10.86 488.00,10.15 488.12,9.63 488.25,9.30 488.38,9.16 488.50,9.21 488.62,9.43 488.75,9.81 488.88,10.32 489.00,10.93 489.12,11.61 489.25,12.33 489.38,13.07 489.50,13.80 489.62,14.49 489.75,15.13 489.88,15.69 490.00,16.17 490.12,16.55 490.25,16.83 490.38,16.99 490.50,17.05 490.62,16.99 490.75,16.83 490.88,16.55 491.00,16.17 491.12,15.69 491.25,15.13 491.38,14.49 491.50,13.80 491.62,13.07 491.75,12.33 491.88,11.61 492.00,10.93 492.12,10.32 492.25,9.81 492.38,9.43 492.50,9.21 492.62,9.16 492.75,9.30 492.88,9.63 493.00,10.15 493.12,10.86 493.25,11.72 493.38,12.71 493.50,13.80 493.62,14.93 493.75,16.07 493.88,17.15 494.00,18.13 494.12,18.96 494.25,19.60 494.38,20.03 494.50,20.20 494.62,20.12 494.75,19.78 494.88,19.20 495.00,18.40 495.12,17.41 495.25,16.28 495.38,15.06 495.50,13.80 495.62,12.56 495.75,11.40 495.88,10.35 496.00,9.47 496.12,8.79 496.25,8.33 496.38,8.10 496.50,8.11 496.62,8.35 496.75,8.78 496.88,9.40 497.00,10.15 497.12,11.01 497.25,11.93 497.38,12.88 497.50,13.80 497.62,14.67 497.75,15.45 497.88,16.13 498.00,16.67 498.12,17.08 498.25,17.34 498.38,17.45 498.50,17.43 498.62,17.28 498.75,17.00 498.88,16.63 499.00,16.17 499.12,15.64 499.25,15.05 499.38,14.44 499.50,13.80 499.62,13.16 499.75,12.55 499.88,11.96 500.00,11.43 500.12,10.97 500.25,10.60 500.38,10.32 500.50,10.17 500.62,10.15 500.75,10.26 500.88,10.52 501.00,10.93 501.12,11.47 501.25,12.15 501.38,12.93 501.50,13.80 501.62,14.72 501.75,15.67 501.88,16.59 502.00,17.45 502.12,18.20 502.25,18.82 502.38,19.25 502.50,19.49 502.62,19.50 502.75,19.27 502.88,18.81 503.00,18.13 503.12,17.25 503.25,16.20 503.38,15.04 503.50,13.80 503.62,12.54 503.75,11.32 503.88,10.19 504.00,9.20 504.12,8.40 504.25,7.82 504.38,7.48 504.50,7.40 504.62,7.57 504.75,8.00 504.88,8.64 505.00,9.47 505.12,10.45 505.25,11.53 505.38,12.67 505.50,13.80 505.62,14.89 505.75,15.88 505.88,16.74 506.00,17.45" stroke="#0c4650" stroke-width="1.100" fill="none" clip-path="url(#ovall)"/>
  <rect x="404" y="3" width="91" height="21" fill="#000"/>
  <polyline points="405.00,6.83 405.12,6.61 405.25,6.47 405.38,6.41 405.50,6.42 405.62,6.50 405.75,6.67 405.88,6.91 406.00,7.22 406.12,7.60 406.25,8.04 406.38,8.55 406.50,9.11 406.62,9.71 406.75,10.37 406.88,11.05 407.00,11.77 407.12,12.51 407.25,13.26 407.38,14.01 407.50,14.77 407.62,15.51 407.75,16.24 407.88,16.94 408.00,17.60 408.12,18.23 408.25,18.81 408.38,19.34 408.50,19.82 408.62,20.22 408.75,20.57 408.88,20.84 409.00,21.03 409.12,21.15 409.25,21.20 409.38,21.17 409.50,21.06 409.62,20.87 409.75,20.61 409.88,20.28 410.00,19.88 410.12,19.42 410.25,18.90 410.38,18.33 410.50,17.71 410.62,17.05 410.75,16.35 410.88,15.63 411.00,14.89 411.12,14.13 411.25,13.38 411.38,12.62 411.50,11.88 411.62,11.17 411.75,10.47 411.88,9.82 412.00,9.20 412.12,8.63 412.25,8.12 412.38,7.66 412.50,7.27 412.62,6.95 412.75,6.70 412.88,6.53 413.00,6.42 413.12,6.40 413.25,6.46 413.38,6.59 413.50,6.79 413.62,7.07 413.75,7.42 413.88,7.84 414.00,8.32 414.12,8.85 414.25,9.44 414.38,10.07 414.50,10.75 414.62,11.45 414.75,12.18 414.88,12.92 415.00,13.68 415.12,14.43 415.25,15.18 415.38,15.92 415.50,16.63 415.62,17.32 415.75,17.96 415.88,18.56 416.00,19.12 416.12,19.62 416.25,20.05 416.38,20.42 416.50,20.73 416.62,20.96 416.75,21.11 416.88,21.19 417.00,21.19 417.12,21.12 417.25,20.96 417.38,20.74 417.50,20.44 417.62,20.07 417.75,19.63 417.88,19.14 418.00,18.59 418.12,17.99 418.25,17.34 418.38,16.66 418.50,15.95 418.62,15.21 418.75,14.47 418.88,13.71 419.00,12.95 419.12,12.21 419.25,11.48 419.38,10.77 419.50,10.10 419.62,9.47 419.75,8.88 419.88,8.34 420.00,7.86 420.12,7.44 420.25,7.08 420.38,6.80 420.50,6.59 420.62,6.46 420.75,6.40 420.88,6.42 421.00,6.52 421.12,6.69 421.25,6.94 421.38,7.26 421.50,7.65 421.62,8.10 421.75,8.61 421.88,9.18 422.00,9.79 422.12,10.45 422.25,11.14 422.38,11.86 422.50,12.59 422.62,13.35 422.75,14.10 422.88,14.86 423.00,15.60 423.12,16.32 423.25,17.02 423.38,17.68 423.50,18.30 423.62,18.88 423.75,19.40 423.88,19.87 424.00,20.27 424.12,20.60 424.25,20.86 424.38,21.05 424.50,21.16 424.62,21.20 424.75,21.16 424.88,21.04 425.00,20.85 425.12,20.58 425.25,20.24 425.38,19.83 425.50,19.36 425.62,18.84 425.75,18.26 425.88,17.63 426.00,16.96 426.12,16.26 426.25,15.54 426.38,14.80 426.50,14.04 426.62,13.29 426.75,12.53 426.88,11.80 427.00,11.08 427.12,10.39 427.25,9.74 427.38,9.13 427.50,8.57 427.62,8.06 427.75,7.61 427.88,7.23 428.00,6.92 428.12,6.68 428.25,6.51 428.38,6.42 428.50,6.40 428.62,6.47 428.75,6.61 428.88,6.82 429.00,7.11 429.12,7.47 429.25,7.89 429.38,8.38 429.50,8.92 429.62,9.51 429.75,10.15 429.88,10.83 430.00,11.54 430.12,12.27 430.25,13.01 430.38,13.77 430.50,14.53 430.62,15.27 430.75,16.01 430.88,16.72 431.00,17.39 431.12,18.04 431.25,18.63 431.38,19.18 431.50,19.67 431.62,20.10 431.75,20.46 431.88,20.76 432.00,20.98 432.12,21.12 432.25,21.19 432.38,21.19 432.50,21.10 432.62,20.94 432.75,20.70 432.88,20.40 433.00,20.02 433.12,19.58 433.25,19.08 433.38,18.52 433.50,17.91 433.62,17.26 433.75,16.58 433.88,15.86 434.00,15.12 434.12,14.37 434.25,13.62 434.38,12.86 434.50,12.12 434.62,11.39 434.75,10.69 434.88,10.02 435.00,9.39 435.12,8.81 435.25,8.28 435.38,7.80 435.50,7.39 435.62,7.05 435.75,6.77 435.88,6.57 436.00,6.45 436.12,6.40 436.25,6.43 436.38,6.54 436.50,6.72 436.62,6.97 436.75,7.30 436.88,7.70 437.00,8.16 437.12,8.68 437.25,9.25 437.38,9.87 437.50,10.53 437.62,11.22 437.75,11.94 437.88,12.68 438.00,13.44 438.12,14.19 438.25,14.95 438.38,15.69 438.50,16.41 438.62,17.10 438.75,17.76 438.88,18.38 439.00,18.95 439.12,19.46 439.25,19.92 439.38,20.31 439.50,20.64 439.62,20.89 439.75,21.07 439.88,21.17 440.00,21.20 440.12,21.15 440.25,21.02 440.38,20.82 440.50,20.54 440.62,20.19 440.75,19.78 440.88,19.30 441.00,18.77 441.12,18.18 441.25,17.55 441.38,16.88 441.50,16.18 441.62,15.45 441.75,14.71 441.88,13.95 442.00,13.20 442.12,12.45 442.25,11.71 442.38,11.00 442.50,10.31 442.62,9.66 442.75,9.06 442.88,8.50 443.00,8.00 443.12,7.56 443.25,7.19 443.38,6.89 443.50,6.65 443.62,6.49 443.75,6.41 443.88,6.41 444.00,6.48 444.12,6.63 444.25,6.85 444.38,7.15 444.50,7.52 444.62,7.95 444.75,8.44 444.88,8.99 445.00,9.59 445.12,10.23 445.25,10.91 445.38,11.62 445.50,12.36 445.62,13.10 445.75,13.86 445.88,14.62 446.00,15.36 446.12,16.09 446.25,16.80 446.38,17.47 446.50,18.11 446.62,18.70 446.75,19.24 446.88,19.73 447.00,20.15 447.12,20.50 447.25,20.79 447.38,21.00 447.50,21.14 447.62,21.20 447.75,21.18 447.88,21.09 448.00,20.92 448.12,20.67 448.25,20.35 448.38,19.97 448.50,19.52 448.62,19.01 448.75,18.45 448.88,17.84 449.00,17.18 449.12,16.49 449.25,15.77 449.38,15.04 449.50,14.28 449.62,13.53 449.75,12.77 449.88,12.03 450.00,11.31 450.12,10.61 450.25,9.94 450.38,9.32 450.50,8.74 450.62,8.22 450.75,7.75 450.88,7.35 451.00,7.01 451.12,6.75 451.25,6.55 451.38,6.44 451.50,6.40 451.62,6.44 451.75,6.55 451.88,6.75 452.00,7.01 452.12,7.35 452.25,7.75 452.38,8.22 452.50,8.74 452.62,9.32 452.75,9.94 452.88,10.61 453.00,11.31 453.12,12.03 453.25,12.77 453.38,13.53 453.50,14.28 453.62,15.04 453.75,15.77 453.88,16.49 454.00,17.18 454.12,17.84 454.25,18.45 454.38,19.01 454.50,19.52 454.62,19.97 454.75,20.35 454.88,20.67 455.00,20.92 455.12,21.09 455.25,21.18 455.38,21.20 455.50,21.14 455.62,21.00 455.75,20.79 455.88,20.50 456.00,20.15 456.12,19.73 456.25,19.24 456.38,18.70 456.50,18.11 456.62,17.47 456.75,16.80 456.88,16.09 457.00,15.36 457.12,14.62 457.25,13.86 457.38,13.10 457.50,12.36 457.62,11.62 457.75,10.91 457.88,10.23 458.00,9.59 458.12,8.99 458.25,8.44 458.38,7.95 458.50,7.52 458.62,7.15 458.75,6.85 458.88,6.63 459.00,6.48 459.12,6.41 459.25,6.41 459.38,6.49 459.50,6.65 459.62,6.89 459.75,7.19 459.88,7.56 460.00,8.00 460.12,8.50 460.25,9.06 460.38,9.66 460.50,10.31 460.62,11.00 460.75,11.71 460.88,12.45 461.00,13.20 461.12,13.95 461.25,14.71 461.38,15.45 461.50,16.18 461.62,16.88 461.75,17.55 461.88,18.18 462.00,18.77 462.12,19.30 462.25,19.78 462.38,20.19 462.50,20.54 462.62,20.82 462.75,21.02 462.88,21.15 463.00,21.20 463.12,21.17 463.25,21.07 463.38,20.89 463.50,20.64 463.62,20.31 463.75,19.92 463.88,19.46 464.00,18.95 464.12,18.38 464.25,17.76 464.38,17.10 464.50,16.41 464.62,15.69 464.75,14.95 464.88,14.19 465.00,13.44 465.12,12.68 465.25,11.94 465.38,11.22 465.50,10.53 465.62,9.87 465.75,9.25 465.88,8.68 466.00,8.16 466.12,7.70 466.25,7.30 466.38,6.97 466.50,6.72 466.62,6.54 466.75,6.43 466.88,6.40 467.00,6.45 467.12,6.57 467.25,6.77 467.38,7.05 467.50,7.39 467.62,7.80 467.75,8.28 467.88,8.81 468.00,9.39 468.12,10.02 468.25,10.69 468.38,11.39 468.50,12.12 468.62,12.86 468.75,13.62 468.88,14.37 469.00,15.12 469.12,15.86 469.25,16.58 469.38,17.26 469.50,17.91 469.62,18.52 469.75,19.08 469.88,19.58 470.00,20.02 470.12,20.40 470.25,20.70 470.38,20.94 470.50,21.10 470.62,21.19 470.75,21.19 470.88,21.12 471.00,20.98 471.12,20.76 471.25,20.46 471.38,20.10 471.50,19.67 471.62,19.18 471.75,18.63 471.88,18.04 472.00,17.39 472.12,16.72 472.25,16.01 472.38,15.27 472.50,14.53 472.62,13.77 472.75,13.01 472.88,12.27 473.00,11.54 473.12,10.83 473.25,10.15 473.38,9.51 473.50,8.92 473.62,8.38 473.75,7.89 473.88,7.47 474.00,7.11 474.12,6.82 474.25,6.61 474.38,6.47 474.50,6.40 474.62,6.42 474.75,6.51 474.88,6.68 475.00,6.92 475.12,7.23 475.25,7.61 475.38,8.06 475.50,8.57 475.62,9.13 475.75,9.74 475.88,10.39 476.00,11.08 476.12,11.80 476.25,12.53 476.38,13.29 476.50,14.04 476.62,14.80 476.75,15.54 476.88,16.26 477.00,16.96 477.12,17.63 477.25,18.26 477.38,18.84 477.50,19.36 477.62,19.83 477.75,20.24 477.88,20.58 478.00,20.85 478.12,21.04 478.25,21.16 478.38,21.20 478.50,21.16 478.62,21.05 478.75,20.86 478.88,20.60 479.00,20.27 479.12,19.87 479.25,19.40 479.38,18.88 479.50,18.30 479.62,17.68 479.75,17.02 479.88,16.32 480.00,15.60 480.12,14.86 480.25,14.10 480.38,13.35 480.50,12.59 480.62,11.86 480.75,11.14 480.88,10.45 481.00,9.79 481.12,9.18 481.25,8.61 481.38,8.10 481.50,7.65 481.62,7.26 481.75,6.94 481.88,6.69 482.00,6.52 482.12,6.42 482.25,6.40 482.38,6.46 482.50,6.59 482.62,6.80 482.75,7.08 482.88,7.44 483.00,7.86 483.12,8.34 483.25,8.88 483.38,9.47 483.50,10.10 483.62,10.77 483.75,11.48 483.88,12.21 484.00,12.95 484.12,13.71 484.25,14.47 484.38,15.21 484.50,15.95 484.62,16.66 484.75,17.34 484.88,17.99 485.00,18.59 485.12,19.14 485.25,19.63 485.38,20.07 485.50,20.44 485.62,20.74 485.75,20.96 485.88,21.12 486.00,21.19 486.12,21.19 486.25,21.11 486.38,20.96 486.50,20.73 486.62,20.42 486.75,20.05 486.88,19.62 487.00,19.12 487.12,18.56 487.25,17.96 487.38,17.32 487.50,16.63 487.62,15.92 487.75,15.18 487.88,14.43 488.00,13.68 488.12,12.92 488.25,12.18 488.38,11.45 488.50,10.75 488.62,10.07 488.75,9.44 488.88,8.85 489.00,8.32 489.12,7.84 489.25,7.42 489.38,7.07 489.50,6.79 489.62,6.59 489.75,6.46 489.88,6.40 490.00,6.42 490.12,6.53 490.25,6.70 490.38,6.95 490.50,7.27 490.62,7.66 490.75,8.12 490.88,8.63 491.00,9.20 491.12,9.82 491.25,10.47 491.38,11.17 491.50,11.88 491.62,12.62 491.75,13.38 491.88,14.13 492.00,14.89 492.12,15.63 492.25,16.35 492.38,17.05 492.50,17.71 492.62,18.33 492.75,18.90 492.88,19.42 493.00,19.88 493.12,20.28 493.25,20.61 493.38,20.87 493.50,21.06 493.62,21.17 493.75,21.20 493.88,21.15 494.00,21.03 494.12,20.84 494.25,20.57 494.38,20.22 494.50,19.82 494.62,19.34 494.75,18.81 494.88,18.23 495.00,17.60" stroke="#00ffff" stroke-width="2.200" fill="none" clip-path="url(#ovwin)"/>
  <rect x="405" y="4" width="89" height="19" fill="none" stroke="#f0641a" stroke-width="2"/>

  <!-- W box -->
  <rect x="521.500" y="3.500" width="21" height="21" fill="#000" stroke="#9a9a9a"/>
  <text class="ar" x="532" y="20" font-size="17.500" font-weight="bold" fill="#c8ffff" text-anchor="middle">W</text>
  <!-- timebase -->
  <rect x="547.500" y="3.300" width="98.500" height="21" rx="10.500" fill="#000"/>
  <text class="ar" x="596.500" y="20.300" font-size="17.500" fill="#fff" text-anchor="middle" textLength="55" lengthAdjust="spacingAndGlyphs" stroke="#000" stroke-width="0.200">2.00us</text>

  <!-- ======================= bottom bar ======================= -->
  <g class="ar" font-size="15.300" stroke-width="0.150">
    <text stroke="#555753" x="15.500" y="469.700" font-size="16" textLength="30" lengthAdjust="spacingAndGlyphs" fill="#ffff00">CH1</text>
    <rect x="48" y="453" width="61.500" height="22" rx="11" fill="#000"/>
    <text stroke="#000" x="79.800" y="472.200" fill="#ffff00" text-anchor="middle">1.00V</text>

    <text stroke="#555753" x="115.500" y="469.700" font-size="16" textLength="30" lengthAdjust="spacingAndGlyphs" fill="#00ffff">CH2</text>
    <rect x="148" y="453" width="61.500" height="22" rx="11" fill="#000"/>
    <text stroke="#000" x="179.800" y="472.200" fill="#00ffff" text-anchor="middle">1.00V</text>

    <text stroke="#555753" x="215.500" y="469.700" font-size="16" textLength="30" lengthAdjust="spacingAndGlyphs" fill="#ff0000">CH3</text>
    <rect x="248" y="453" width="61.500" height="22" rx="11" fill="#000"/>
    <text stroke="#000" x="279.800" y="472.200" fill="#ff0000" text-anchor="middle">1.00V</text>

    <text stroke="#555753" x="315.500" y="469.700" font-size="16" textLength="30" lengthAdjust="spacingAndGlyphs" fill="#00ff00">CH4</text>
    <rect x="348" y="453" width="61.500" height="22" rx="11" fill="#000"/>
    <text stroke="#000" x="379.800" y="472.200" fill="#00ff00" text-anchor="middle">1.00V</text>

    <text stroke="#555753" x="418.500" y="469.700" font-size="16" textLength="30" lengthAdjust="spacingAndGlyphs" fill="#ffff00">CH1</text>
    <path d="M453 472H459.500L464.500 457H471" stroke="#8ec4ff" stroke-width="2" fill="none"/>
    <rect x="473" y="453" width="69.500" height="22" rx="11" fill="#000"/>
    <text stroke="#000" x="508" y="469.700" fill="#ffff00" text-anchor="middle">1.56V</text>

    <rect x="549.500" y="453" width="100.500" height="22" rx="11" fill="#000"/>
    <text stroke="#000" x="599.800" y="469.700" fill="#ffff00" text-anchor="middle" textLength="85.500" lengthAdjust="spacingAndGlyphs">50.0000KHz</text>
  </g>

  <!-- ======================= right menu ======================= -->
  <rect x="656" y="0" width="144" height="480" fill="#777777"/>
  <rect x="656" y="0" width="1.200" height="480" fill="#aaa6aa"/>
  <rect x="657" y="0" width="143" height="1" fill="#9a9a9a"/>
  <rect x="657" y="1" width="143" height="27" fill="#3f443f"/>
  <text class="ar" x="716.800" y="21" font-size="20.500" fill="#fff" text-anchor="middle" textLength="76" lengthAdjust="spacingAndGlyphs">UTILITY</text>
  <rect x="777" y="3" width="21" height="21" fill="#ff3300"/>
  <path d="M782.200 7L793 19M793 7L782.200 19" stroke="#fff" stroke-width="2.500" stroke-linecap="round" fill="none"/>

  <g class="btn go">
    <!-- System Status -->
    <path d="M673.500 102.500V67.500L676.500 64.500H779" stroke="#d8d0d8" fill="none"/>
    <path d="M779 64.500L782.500 68V102L779.500 105.500H676.500L673.500 102.500" stroke="#2a2a2a" fill="none"/>
    <text x="727.800" y="83.700" textLength="58.200" lengthAdjust="spacingAndGlyphs">System</text>
    <text x="727.600" y="101.700" textLength="54" lengthAdjust="spacingAndGlyphs">Status</text>
    <!-- Update Firmware -->
    <path d="M673.500 183.500V148.500L676.500 145.500H779" stroke="#d8d0d8" fill="none"/>
    <path d="M779 145.500L782.500 149V183L779.500 186.500H676.500L673.500 183.500" stroke="#2a2a2a" fill="none"/>
    <text x="727.700" y="164.700" textLength="56.600" lengthAdjust="spacingAndGlyphs">Update</text>
    <text x="728" y="182.700" textLength="72.600" lengthAdjust="spacingAndGlyphs">Firmware</text>
    <!-- Save Waveform -->
    <path d="M673.500 259.500V224.500L676.500 221.500H779" stroke="#d8d0d8" fill="none"/>
    <path d="M779 221.500L782.500 225V259L779.500 262.500H676.500L673.500 259.500" stroke="#2a2a2a" fill="none"/>
    <text x="727.900" y="240.700" textLength="38.200" lengthAdjust="spacingAndGlyphs">Save</text>
    <text x="727.700" y="258.700" textLength="77.200" lengthAdjust="spacingAndGlyphs">Waveform</text>
    <!-- Do Self Cal -->
    <path d="M673.500 343.500V308.500L676.500 305.500H779" stroke="#d8d0d8" fill="none"/>
    <path d="M779 305.500L782.500 309V343L779.500 346.500H676.500L673.500 343.500" stroke="#2a2a2a" fill="none"/>
    <text x="727.200" y="332.700" word-spacing="-4.500" textLength="92" lengthAdjust="spacingAndGlyphs">Do Self Cal</text>
    <!-- Page -->
    <path d="M678.500 469.500V451.500L681.500 448.500H774" stroke="#d8d0d8" fill="none"/>
    <path d="M774 448.500L777.500 452V469L774.500 472.500H681.500L678.500 469.500" stroke="#2a2a2a" fill="none"/>
    <text x="728" y="466.700" word-spacing="-4.500" textLength="72.600" lengthAdjust="spacingAndGlyphs">Page 1/4</text>
  </g>
</svg>
</body>
</html>
